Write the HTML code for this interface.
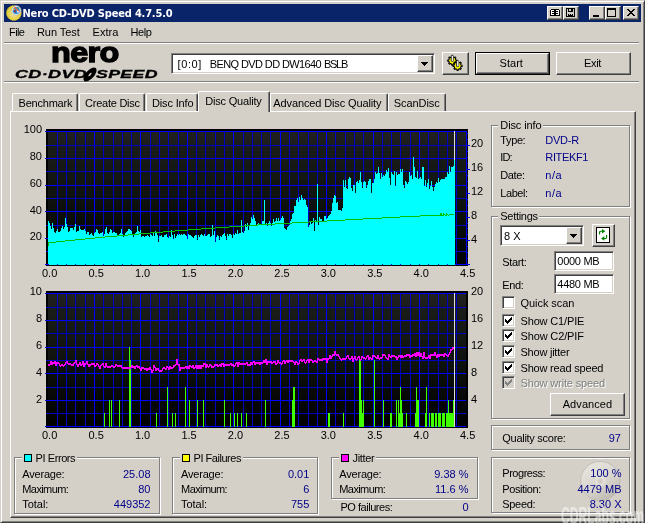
<!DOCTYPE html><html><head><meta charset="utf-8"><title>Nero CD-DVD Speed 4.7.5.0</title><style>
*{box-sizing:border-box}
html,body{margin:0;padding:0}
body{width:645px;height:523px;overflow:hidden;background:#d4d0c8;position:relative;font-family:"Liberation Sans",sans-serif;font-size:11px;color:#000;line-height:13px}
.a{position:absolute;white-space:nowrap}
.t{position:absolute;white-space:nowrap;height:13px;line-height:13px}
.v{color:#000088}
.r{text-align:right}
.btn{position:absolute;background:#d4d0c8;border:1px solid;border-color:#fff #404040 #404040 #fff;box-shadow:inset -1px -1px 0 #808080,inset 1px 1px 0 #d4d0c8;text-align:center}
.sunk{position:absolute;background:#fff;border:1px solid;border-color:#808080 #fff #fff #808080;box-shadow:inset 1px 1px 0 #404040,inset -1px -1px 0 #d4d0c8}
.grp{position:absolute;border:1px solid #808080;box-shadow:inset 1px 1px 0 #fff,1px 1px 0 #fff}
.grp2{position:absolute;border:1px solid #808080;box-shadow:inset 1px 1px 0 #fff,1px 1px 0 #fff}
.glab{position:absolute;background:#d4d0c8;height:13px;line-height:13px;padding:0 2px;white-space:nowrap}
.tab{position:absolute;background:#d4d0c8;border-top:1px solid #fff;border-left:1px solid #fff;border-right:1px solid #404040;border-radius:2px 2px 0 0;box-shadow:inset -1px 0 0 #808080}
.cb{position:absolute;width:13px;height:13px;background:#fff;border:1px solid;border-color:#808080 #fff #fff #808080;box-shadow:inset 1px 1px 0 #404040,inset -1px -1px 0 #d4d0c8}
.hl{position:absolute;height:2px;border-top:1px solid #808080;border-bottom:1px solid #fff}
</style></head><body><div id="w" style="position:absolute;left:0;top:0;width:645px;height:523px;will-change:transform">
<div class="a" style="left:0;top:0;width:645px;height:523px;border:1px solid;border-color:#d4d0c8 #404040 #404040 #d4d0c8;box-shadow:inset 1px 1px 0 #fff,inset -1px -1px 0 #808080"></div>
<div class="a" style="left:4px;top:4px;width:637px;height:18px;background:#0a246a"></div>
<div class="a" style="left:22.5px;top:7px;height:14px;line-height:14px;color:#fff;font-family:'DejaVu Sans Condensed','DejaVu Sans','Liberation Sans',sans-serif;font-weight:bold;font-size:11px;letter-spacing:-0.18px">Nero CD-DVD Speed 4.7.5.0</div>
<svg class="a" style="left:5px;top:4px" width="19" height="18" viewBox="0 0 19 18">
<defs><radialGradient id="gd" cx="0.5" cy="0.55" r="0.5"><stop offset="0" stop-color="#efe6b0"/><stop offset="0.55" stop-color="#e6d460"/><stop offset="1" stop-color="#e2cc18"/></radialGradient></defs>
<polygon points="16.90,9.00 16.03,10.02 16.58,11.25 15.45,11.99 15.63,13.33 14.34,13.71 14.14,15.05 12.79,15.06 12.22,16.28 10.93,15.91 10.04,16.92 8.90,16.20 7.76,16.92 6.87,15.91 5.58,16.28 5.01,15.06 3.66,15.05 3.46,13.71 2.17,13.33 2.35,11.99 1.22,11.25 1.77,10.02 0.90,9.00 1.77,7.98 1.22,6.75 2.35,6.01 2.17,4.67 3.46,4.29 3.66,2.95 5.01,2.94 5.58,1.72 6.87,2.09 7.76,1.08 8.90,1.80 10.04,1.08 10.93,2.09 12.22,1.72 12.79,2.94 14.14,2.95 14.34,4.29 15.63,4.67 15.45,6.01 16.58,6.75 16.03,7.98" fill="url(#gd)"/>
<circle cx="11.3" cy="6.4" r="4.7" fill="#e4e6ec" stroke="#a8acb8" stroke-width=".6"/>
<circle cx="11.3" cy="6.4" r="3.5" fill="#2a92e0"/>
<path d="M8.6 7.4 L10.4 5.6 L10.6 8.9Z" fill="#a01414"/>
<path d="M9.8 3.4 L13.6 7.6" stroke="#f0683a" stroke-width="1.5" stroke-linecap="round"/>
<path d="M12 3.2 L14.2 3.6 L13.6 5.2Z" fill="#2a8a34"/>
<circle cx="12.9" cy="7.7" r=".9" fill="#fff"/><circle cx="8.6" cy="5.4" r=".7" fill="#f8e020"/>
</svg>
<div class="btn" style="left:547px;top:6px;width:16px;height:14px"></div>
<svg class="a" style="left:547px;top:6px" width="16" height="14" viewBox="0 0 16 14" shape-rendering="crispEdges"><rect x="3" y="3" width="5" height="7" fill="#000"/><rect x="4" y="4" width="3" height="5" fill="#fff"/><rect x="8" y="3" width="5" height="7" fill="#000"/><rect x="9" y="4" width="3" height="5" fill="#fff"/><rect x="5" y="5" width="2" height="1" fill="#000"/><rect x="5" y="7" width="2" height="1" fill="#000"/><rect x="9" y="5" width="2" height="1" fill="#000"/><rect x="9" y="7" width="2" height="1" fill="#000"/><rect x="3" y="3" width="1" height="1" fill="#d4d0c8"/><rect x="12" y="3" width="1" height="1" fill="#d4d0c8"/></svg>
<div class="btn" style="left:563px;top:6px;width:16px;height:14px"></div>
<svg class="a" style="left:563px;top:6px" width="16" height="14" viewBox="0 0 16 14" shape-rendering="crispEdges"><rect x="3.5" y="2.5" width="8" height="8" fill="none" stroke="#000" stroke-width="1"/><rect x="5" y="3" width="5" height="3" fill="#000"/><rect x="6" y="3" width="2" height="2" fill="#d4d0c8"/><rect x="5" y="8" width="5" height="2" fill="#000"/><rect x="6" y="8" width="1" height="1" fill="#d4d0c8"/><rect x="8" y="8" width="1" height="1" fill="#d4d0c8"/></svg>
<div class="btn" style="left:589px;top:6px;width:16px;height:14px"></div>
<svg class="a" style="left:589px;top:6px" width="16" height="14" viewBox="0 0 16 14" shape-rendering="crispEdges"><rect x="4" y="9" width="6" height="2" fill="#000"/></svg>
<div class="btn" style="left:605px;top:6px;width:16px;height:14px"></div>
<svg class="a" style="left:605px;top:6px" width="16" height="14" viewBox="0 0 16 14" shape-rendering="crispEdges"><rect x="2" y="2" width="9" height="9" fill="#000"/><rect x="3" y="4" width="7" height="6" fill="#d4d0c8"/></svg>
<div class="btn" style="left:623px;top:6px;width:16px;height:14px"></div>
<svg class="a" style="left:623px;top:6px" width="16" height="14" viewBox="0 0 16 14" shape-rendering="crispEdges"><path d="M4 3h2v1h1v1h2v-1h1v-1h2v1h-1v1h-1v1h-1v1h1v1h1v1h1v1h-2v-1h-1v-1h-2v1h-1v1h-2v-1h1v-1h1v-1h1v-1h-1v-1h-1v-1h-1z" fill="#000"/></svg>
<div class="t " style="left:9px;top:26px;letter-spacing:-0.58px;">File</div>
<div class="t " style="left:37px;top:26px;letter-spacing:-0.07px;">Run Test</div>
<div class="t " style="left:92.5px;top:26px;letter-spacing:0.06px;">Extra</div>
<div class="t " style="left:130.5px;top:26px;letter-spacing:-0.41px;">Help</div>
<div class="hl" style="left:4px;top:42px;width:635px"></div>
<div class="hl" style="left:4px;top:81px;width:635px"></div>
<div class="a" style="left:51px;top:35.5px;font-weight:bold;font-size:27px;line-height:34px;letter-spacing:-0.5px;-webkit-text-stroke:1.3px #000;transform-origin:0 0;transform:scaleX(1.2)">nero</div>
<div class="a" style="left:14.5px;top:68px;font-weight:bold;font-style:italic;font-size:10px;line-height:13px;transform-origin:0 0;transform:scaleX(1.8);letter-spacing:0.2px;-webkit-text-stroke:0.3px #000">CD·DVD</div>
<div class="a" style="left:96px;top:68px;font-weight:bold;font-style:italic;font-size:10px;line-height:13px;transform-origin:0 0;transform:scaleX(1.77);letter-spacing:0.2px;-webkit-text-stroke:0.3px #000">SPEED</div>
<svg class="a" style="left:80.5px;top:65.5px" width="18" height="17" viewBox="0 0 18 17"><ellipse cx="9" cy="8.5" rx="8.6" ry="4.2" transform="rotate(-48 9 8.5)" fill="#000"/><ellipse cx="9" cy="8.5" rx="2.2" ry="0.9" transform="rotate(-48 9 8.5)" fill="#d4d0c8"/></svg>
<div class="sunk" style="left:171px;top:53px;width:264px;height:21px"></div>
<div class="t " style="left:177.5px;top:58px;letter-spacing:0.61px;">[0:0]</div>
<div class="t " style="left:209.7px;top:58px;letter-spacing:-0.60px;">BENQ DVD DD DW1640</div>
<div class="t " style="left:324px;top:58px;letter-spacing:-1.29px;">BSLB</div>
<div class="btn" style="left:417px;top:55px;width:16px;height:17px"></div>
<svg class="a" style="left:417px;top:55px" width="16" height="17" shape-rendering="crispEdges"><path d="M4 7h7l-3.5 4z" fill="#000"/></svg>
<div class="btn" style="left:442px;top:52px;width:27px;height:23px"></div>
<svg class="a" style="left:442px;top:52px" width="27" height="23" viewBox="442 52 27 23"><path d="M455.72 59.84L456.86 60.02L456.86 61.18L455.72 61.36L455.26 62.48L455.93 63.42L455.12 64.23L454.18 63.56L453.06 64.02L452.88 65.16L451.72 65.16L451.54 64.02L450.42 63.56L449.48 64.23L448.67 63.42L449.34 62.48L448.88 61.36L447.74 61.18L447.74 60.02L448.88 59.84L449.34 58.72L448.67 57.78L449.48 56.97L450.42 57.64L451.54 57.18L451.72 56.04L452.88 56.04L453.06 57.18L454.18 57.64L455.12 56.97L455.93 57.78L455.26 58.72Z" fill="#f8f400" stroke="#000" stroke-width="1.1" stroke-linejoin="round"/><path d="M461.02 65.04L462.16 65.22L462.16 66.38L461.02 66.56L460.56 67.68L461.23 68.62L460.42 69.43L459.48 68.76L458.36 69.22L458.18 70.36L457.02 70.36L456.84 69.22L455.72 68.76L454.78 69.43L453.97 68.62L454.64 67.68L454.18 66.56L453.04 66.38L453.04 65.22L454.18 65.04L454.64 63.92L453.97 62.98L454.78 62.17L455.72 62.84L456.84 62.38L457.02 61.24L458.18 61.24L458.36 62.38L459.48 62.84L460.42 62.17L461.23 62.98L460.56 63.92Z" fill="#f8f400" stroke="#000" stroke-width="1.1" stroke-linejoin="round"/><path d="M451.2 56.2l1.1-1.4 1.1 1.4v5h-2.2z" fill="#c8c8d8" stroke="#000" stroke-width=".7"/><rect x="452.2" y="56" width="0.9" height="5" fill="#fff"/><path d="M456.5 61.4l1.1-1.4 1.1 1.4v5h-2.2z" fill="#c8c8d8" stroke="#000" stroke-width=".7"/><rect x="457.5" y="61.2" width="0.9" height="5" fill="#fff"/></svg>
<div class="a" style="left:475px;top:52px;width:75px;height:23px;background:#000"></div>
<div class="btn" style="left:476px;top:53px;width:73px;height:21px"></div>
<div class="t " style="left:499.5px;top:57px;letter-spacing:0.05px;">Start</div>
<div class="btn" style="left:556px;top:52px;width:75px;height:23px"></div>
<div class="t " style="left:584px;top:57px;letter-spacing:-0.34px;">Exit</div>
<div class="a" style="left:10px;top:111px;width:626px;height:407px;border:1px solid;border-color:#fff #404040 #404040 #fff;box-shadow:inset -1px -1px 0 #808080"></div>
<div class="tab" style="left:12px;top:93px;width:66px;height:18px"></div>
<div class="t " style="left:18.5px;top:97px;letter-spacing:-0.21px;">Benchmark</div>
<div class="tab" style="left:79px;top:93px;width:66px;height:18px"></div>
<div class="t " style="left:85px;top:97px;letter-spacing:-0.24px;">Create Disc</div>
<div class="tab" style="left:146px;top:93px;width:52px;height:18px"></div>
<div class="t " style="left:152px;top:97px;letter-spacing:-0.15px;">Disc Info</div>
<div class="tab" style="left:270px;top:93px;width:118px;height:18px"></div>
<div class="t " style="left:273.3px;top:97px;letter-spacing:-0.12px;">Advanced Disc Quality</div>
<div class="tab" style="left:388px;top:93px;width:58px;height:18px"></div>
<div class="t " style="left:393.7px;top:97px;letter-spacing:-0.06px;">ScanDisc</div>
<div class="tab" style="left:198px;top:91px;width:72px;height:21px"></div>
<div class="t " style="left:205.3px;top:95px;letter-spacing:-0.20px;">Disc Quality</div>
<svg class="a" style="left:0;top:0" width="645" height="523" viewBox="0 0 645 523" shape-rendering="crispEdges">
<defs><linearGradient id="bg129" x1="0" y1="0" x2="0" y2="1"><stop offset="0" stop-color="#202020"/><stop offset="0.12" stop-color="#1a1c1a"/><stop offset="0.5" stop-color="#0f120f"/><stop offset="1" stop-color="#000"/></linearGradient><linearGradient id="bg291" x1="0" y1="0" x2="0" y2="1"><stop offset="0" stop-color="#202020"/><stop offset="0.12" stop-color="#1a1c1a"/><stop offset="0.5" stop-color="#0f120f"/><stop offset="1" stop-color="#000"/></linearGradient></defs>
<rect x="46" y="129" width="422" height="137" fill="#000"/>
<rect x="48" y="131" width="418" height="133" fill="url(#bg129)"/>
<rect x="57" y="131" width="1" height="134" fill="#0000c4"/>
<rect x="66" y="131" width="1" height="134" fill="#0000c4"/>
<rect x="75" y="131" width="1" height="134" fill="#0000c4"/>
<rect x="85" y="131" width="1" height="134" fill="#0000c4"/>
<rect x="94" y="131" width="1" height="134" fill="#0000ff"/>
<rect x="103" y="131" width="1" height="134" fill="#0000c4"/>
<rect x="113" y="131" width="1" height="134" fill="#0000c4"/>
<rect x="122" y="131" width="1" height="134" fill="#0000c4"/>
<rect x="131" y="131" width="1" height="134" fill="#0000c4"/>
<rect x="140" y="131" width="1" height="134" fill="#0000ff"/>
<rect x="150" y="131" width="1" height="134" fill="#0000c4"/>
<rect x="159" y="131" width="1" height="134" fill="#0000c4"/>
<rect x="168" y="131" width="1" height="134" fill="#0000c4"/>
<rect x="178" y="131" width="1" height="134" fill="#0000c4"/>
<rect x="187" y="131" width="1" height="134" fill="#0000ff"/>
<rect x="196" y="131" width="1" height="134" fill="#0000c4"/>
<rect x="205" y="131" width="1" height="134" fill="#0000c4"/>
<rect x="215" y="131" width="1" height="134" fill="#0000c4"/>
<rect x="224" y="131" width="1" height="134" fill="#0000c4"/>
<rect x="233" y="131" width="1" height="134" fill="#0000ff"/>
<rect x="243" y="131" width="1" height="134" fill="#0000c4"/>
<rect x="252" y="131" width="1" height="134" fill="#0000c4"/>
<rect x="261" y="131" width="1" height="134" fill="#0000c4"/>
<rect x="270" y="131" width="1" height="134" fill="#0000c4"/>
<rect x="280" y="131" width="1" height="134" fill="#0000ff"/>
<rect x="289" y="131" width="1" height="134" fill="#0000c4"/>
<rect x="298" y="131" width="1" height="134" fill="#0000c4"/>
<rect x="308" y="131" width="1" height="134" fill="#0000c4"/>
<rect x="317" y="131" width="1" height="134" fill="#0000c4"/>
<rect x="326" y="131" width="1" height="134" fill="#0000ff"/>
<rect x="335" y="131" width="1" height="134" fill="#0000c4"/>
<rect x="345" y="131" width="1" height="134" fill="#0000c4"/>
<rect x="354" y="131" width="1" height="134" fill="#0000c4"/>
<rect x="363" y="131" width="1" height="134" fill="#0000c4"/>
<rect x="373" y="131" width="1" height="134" fill="#0000ff"/>
<rect x="382" y="131" width="1" height="134" fill="#0000c4"/>
<rect x="391" y="131" width="1" height="134" fill="#0000c4"/>
<rect x="400" y="131" width="1" height="134" fill="#0000c4"/>
<rect x="410" y="131" width="1" height="134" fill="#0000c4"/>
<rect x="419" y="131" width="1" height="134" fill="#0000ff"/>
<rect x="428" y="131" width="1" height="134" fill="#0000c4"/>
<rect x="438" y="131" width="1" height="134" fill="#0000c4"/>
<rect x="447" y="131" width="1" height="134" fill="#0000c4"/>
<rect x="456" y="131" width="1" height="134" fill="#0000c4"/>
<rect x="466" y="131" width="1" height="134" fill="#0000ff"/>
<rect x="45" y="131" width="421" height="1" fill="#0000ff"/>
<rect x="46" y="145" width="420" height="1" fill="#0000c4"/>
<rect x="45" y="158" width="421" height="1" fill="#0000ff"/>
<rect x="46" y="171" width="420" height="1" fill="#0000c4"/>
<rect x="45" y="185" width="421" height="1" fill="#0000ff"/>
<rect x="46" y="198" width="420" height="1" fill="#0000c4"/>
<rect x="45" y="211" width="421" height="1" fill="#0000ff"/>
<rect x="46" y="225" width="420" height="1" fill="#0000c4"/>
<rect x="45" y="238" width="421" height="1" fill="#0000ff"/>
<rect x="46" y="251" width="420" height="1" fill="#0000c4"/>
<rect x="45" y="264" width="421" height="1" fill="#0000ff"/>
<rect x="466" y="264" width="4" height="1" fill="#0000ff"/>
<rect x="466" y="258" width="2" height="1" fill="#0000ff"/>
<rect x="466" y="252" width="2" height="1" fill="#0000ff"/>
<rect x="466" y="246" width="2" height="1" fill="#0000ff"/>
<rect x="466" y="240" width="4" height="1" fill="#0000ff"/>
<rect x="466" y="234" width="2" height="1" fill="#0000ff"/>
<rect x="466" y="228" width="2" height="1" fill="#0000ff"/>
<rect x="466" y="223" width="2" height="1" fill="#0000ff"/>
<rect x="466" y="217" width="4" height="1" fill="#0000ff"/>
<rect x="466" y="211" width="2" height="1" fill="#0000ff"/>
<rect x="466" y="205" width="2" height="1" fill="#0000ff"/>
<rect x="466" y="199" width="2" height="1" fill="#0000ff"/>
<rect x="466" y="193" width="4" height="1" fill="#0000ff"/>
<rect x="466" y="187" width="2" height="1" fill="#0000ff"/>
<rect x="466" y="181" width="2" height="1" fill="#0000ff"/>
<rect x="466" y="175" width="2" height="1" fill="#0000ff"/>
<rect x="466" y="169" width="4" height="1" fill="#0000ff"/>
<rect x="466" y="163" width="2" height="1" fill="#0000ff"/>
<rect x="466" y="157" width="2" height="1" fill="#0000ff"/>
<rect x="466" y="151" width="2" height="1" fill="#0000ff"/>
<rect x="466" y="145" width="4" height="1" fill="#0000ff"/>
<rect x="466" y="139" width="2" height="1" fill="#0000ff"/>
<rect x="466" y="133" width="2" height="1" fill="#0000ff"/>
<rect x="454" y="131" width="1" height="134" fill="#dcdcdc"/>
<path d="M48 265V221H49V223H50V226H51V229H52V223H53V228H54V232H55V233H56V231H57V229H58V232H59V232H60V231H61V228H62V226H63V229H64V227H65V218H66V224H67V227H68V232H69V231H70V228H71V228H72V228H73V230H74V227H75V224H76V232H77V231H78V231H79V226H80V229H81V230H82V230H83V230H84V229H85V231H86V234H87V232H88V232H89V235H90V234H91V233H92V235H93V236H94V233H95V232H96V229H97V230H98V233H99V234H100V233H101V233H102V232H103V236H104V234H105V229H106V227H107V233H108V234H109V232H110V229H111V230H112V233H113V232H114V232H115V233H116V233H117V236H118V235H119V234H120V233H121V229H122V234H123V237H124V236H125V233H126V232H127V231H128V229H129V229H130V230H131V231H132V235H133V237H134V235H135V233H136V232H137V226H138V231H139V232H140V230H141V237H142V236H143V236H144V237H145V236H146V236H147V235H148V236H149V237H150V234H151V235H152V236H153V233H154V236H155V231H156V233H157V235H158V242H159V236H160V236H161V235H162V237H163V237H164V235H165V235H166V234H167V237H168V238H169V236H170V237H171V230H172V235H173V239H174V234H175V238H176V236H177V234H178V235H179V234H180V235H181V234H182V235H183V234H184V234H185V235H186V236H187V239H188V234H189V235H190V235H191V236H192V237H193V238H194V236H195V235H196V235H197V240H198V235H199V237H200V235H201V234H202V235H203V236H204V234H205V236H206V236H207V235H208V234H209V234H210V237H211V236H212V225H213V235H214V231H215V242H216V237H217V235H218V236H219V240H220V236H221V237H222V235H223V234H224V233H225V236H226V240H227V234H228V236H229V234H230V234H231V235H232V238H233V234H234V235H235V233H236V234H237V230H238V234H239V233H240V233H241V220H242V232H243V233H244V231H245V224H246V227H247V223H248V230H249V225H250V223H251V217H252V219H253V215H254V218H255V221H256V225H257V224H258V223H259V224H260V224H261V225H262V221H263V221H264V200H265V225H266V223H267V226H268V223H269V221H270V223H271V226H272V223H273V219H274V222H275V221H276V218H277V221H278V218H279V221H280V220H281V218H282V216H283V218H284V228H285V229H286V230H287V227H288V226H289V225H290V221H291V219H292V214H293V213H294V206H295V206H296V200H297V198H298V202H299V197H300V200H301V195H302V198H303V200H304V199H305V200H306V205H307V207H308V227H309V225H310V221H311V224H312V223H313V218H314V231H315V220H316V221H317V184H318V225H319V217H320V219H321V219H322V221H323V222H324V216H325V216H326V219H327V218H328V216H329V215H330V214H331V211H332V203H333V198H334V195H335V196H336V203H337V202H338V210H339V210H340V210H341V211H342V208H343V180H344V187H345V180H346V188H347V189H348V179H349V177H350V178H351V188H352V191H353V185H354V185H355V193H356V182H357V181H358V183H359V180H360V172H361V182H362V188H363V182H364V181H365V182H366V188H367V185H368V181H369V179H370V179H371V193H372V183H373V183H374V179H375V172H376V174H377V173H378V167H379V173H380V179H381V173H382V177H383V175H384V176H385V174H386V170H387V172H388V168H389V178H390V185H391V172H392V174H393V175H394V171H395V186H396V172H397V175H398V174H399V174H400V169H401V172H402V169H403V185H404V188H405V181H406V182H407V184H408V182H409V172H410V176H411V175H412V179H413V157H414V167H415V177H416V178H417V171H418V179H419V178H420V177H421V179H422V167H423V167H424V186H425V180H426V187H427V183H428V179H429V189H430V186H431V181H432V187H433V191H434V187H435V184H436V182H437V183H438V178H439V182H440V180H441V179H442V179H443V179H444V179H445V177H446V177H447V172H448V174H449V166H450V172H451V167H452V167H453V166H454V160H455V265Z" fill="#00ffff"/>
<rect x="48" y="264" width="1" height="1" fill="#0000ff"/>
<rect x="57" y="264" width="1" height="1" fill="#0000ff"/>
<rect x="66" y="264" width="1" height="1" fill="#0000ff"/>
<rect x="75" y="264" width="1" height="1" fill="#0000ff"/>
<rect x="85" y="264" width="1" height="1" fill="#0000ff"/>
<rect x="94" y="264" width="1" height="1" fill="#0000ff"/>
<rect x="103" y="264" width="1" height="1" fill="#0000ff"/>
<rect x="113" y="264" width="1" height="1" fill="#0000ff"/>
<rect x="122" y="264" width="1" height="1" fill="#0000ff"/>
<rect x="131" y="264" width="1" height="1" fill="#0000ff"/>
<rect x="140" y="264" width="1" height="1" fill="#0000ff"/>
<rect x="150" y="264" width="1" height="1" fill="#0000ff"/>
<rect x="159" y="264" width="1" height="1" fill="#0000ff"/>
<rect x="168" y="264" width="1" height="1" fill="#0000ff"/>
<rect x="178" y="264" width="1" height="1" fill="#0000ff"/>
<rect x="187" y="264" width="1" height="1" fill="#0000ff"/>
<rect x="196" y="264" width="1" height="1" fill="#0000ff"/>
<rect x="205" y="264" width="1" height="1" fill="#0000ff"/>
<rect x="215" y="264" width="1" height="1" fill="#0000ff"/>
<rect x="224" y="264" width="1" height="1" fill="#0000ff"/>
<rect x="233" y="264" width="1" height="1" fill="#0000ff"/>
<rect x="243" y="264" width="1" height="1" fill="#0000ff"/>
<rect x="252" y="264" width="1" height="1" fill="#0000ff"/>
<rect x="261" y="264" width="1" height="1" fill="#0000ff"/>
<rect x="270" y="264" width="1" height="1" fill="#0000ff"/>
<rect x="280" y="264" width="1" height="1" fill="#0000ff"/>
<rect x="289" y="264" width="1" height="1" fill="#0000ff"/>
<rect x="298" y="264" width="1" height="1" fill="#0000ff"/>
<rect x="308" y="264" width="1" height="1" fill="#0000ff"/>
<rect x="317" y="264" width="1" height="1" fill="#0000ff"/>
<rect x="326" y="264" width="1" height="1" fill="#0000ff"/>
<rect x="335" y="264" width="1" height="1" fill="#0000ff"/>
<rect x="345" y="264" width="1" height="1" fill="#0000ff"/>
<rect x="354" y="264" width="1" height="1" fill="#0000ff"/>
<rect x="363" y="264" width="1" height="1" fill="#0000ff"/>
<rect x="373" y="264" width="1" height="1" fill="#0000ff"/>
<rect x="382" y="264" width="1" height="1" fill="#0000ff"/>
<rect x="391" y="264" width="1" height="1" fill="#0000ff"/>
<rect x="400" y="264" width="1" height="1" fill="#0000ff"/>
<rect x="410" y="264" width="1" height="1" fill="#0000ff"/>
<rect x="419" y="264" width="1" height="1" fill="#0000ff"/>
<rect x="428" y="264" width="1" height="1" fill="#0000ff"/>
<rect x="438" y="264" width="1" height="1" fill="#0000ff"/>
<rect x="447" y="264" width="1" height="1" fill="#0000ff"/>
<rect x="45" y="264" width="4" height="1" fill="#0000ff"/><rect x="455" y="264" width="15" height="1" fill="#0000ff"/>
<rect x="48" y="242" width="1" height="4" fill="#00c000"/>
<rect x="48" y="242" width="1" height="1" fill="#00c000"/>
<rect x="49" y="242" width="1" height="1" fill="#00c000"/>
<rect x="50" y="242" width="1" height="1" fill="#00c000"/>
<rect x="51" y="242" width="1" height="1" fill="#00c000"/>
<rect x="52" y="242" width="1" height="1" fill="#00c000"/>
<rect x="53" y="242" width="1" height="1" fill="#00c000"/>
<rect x="54" y="242" width="1" height="1" fill="#00c000"/>
<rect x="55" y="242" width="1" height="1" fill="#00c000"/>
<rect x="56" y="241" width="1" height="1" fill="#00c000"/>
<rect x="57" y="241" width="1" height="1" fill="#00c000"/>
<rect x="58" y="241" width="1" height="1" fill="#00c000"/>
<rect x="59" y="241" width="1" height="1" fill="#00c000"/>
<rect x="60" y="241" width="1" height="1" fill="#00c000"/>
<rect x="61" y="241" width="1" height="1" fill="#00c000"/>
<rect x="62" y="241" width="1" height="1" fill="#00c000"/>
<rect x="63" y="241" width="1" height="1" fill="#00c000"/>
<rect x="64" y="241" width="1" height="1" fill="#00c000"/>
<rect x="65" y="240" width="1" height="1" fill="#00c000"/>
<rect x="66" y="240" width="1" height="1" fill="#00c000"/>
<rect x="67" y="240" width="1" height="1" fill="#00c000"/>
<rect x="68" y="240" width="1" height="1" fill="#00c000"/>
<rect x="69" y="240" width="1" height="1" fill="#00c000"/>
<rect x="70" y="240" width="1" height="1" fill="#00c000"/>
<rect x="71" y="240" width="1" height="1" fill="#00c000"/>
<rect x="72" y="240" width="1" height="1" fill="#00c000"/>
<rect x="73" y="240" width="1" height="1" fill="#00c000"/>
<rect x="74" y="240" width="1" height="1" fill="#00c000"/>
<rect x="75" y="239" width="1" height="1" fill="#00c000"/>
<rect x="76" y="239" width="1" height="1" fill="#00c000"/>
<rect x="77" y="239" width="1" height="1" fill="#00c000"/>
<rect x="78" y="239" width="1" height="1" fill="#00c000"/>
<rect x="79" y="239" width="1" height="1" fill="#00c000"/>
<rect x="80" y="239" width="1" height="1" fill="#00c000"/>
<rect x="81" y="239" width="1" height="1" fill="#00c000"/>
<rect x="82" y="239" width="1" height="1" fill="#00c000"/>
<rect x="83" y="239" width="1" height="1" fill="#00c000"/>
<rect x="84" y="239" width="1" height="1" fill="#00c000"/>
<rect x="85" y="238" width="1" height="1" fill="#00c000"/>
<rect x="86" y="238" width="1" height="1" fill="#00c000"/>
<rect x="87" y="238" width="1" height="1" fill="#00c000"/>
<rect x="88" y="238" width="1" height="1" fill="#00c000"/>
<rect x="89" y="238" width="1" height="1" fill="#00c000"/>
<rect x="90" y="238" width="1" height="1" fill="#00c000"/>
<rect x="91" y="238" width="1" height="1" fill="#00c000"/>
<rect x="92" y="238" width="1" height="1" fill="#00c000"/>
<rect x="93" y="238" width="1" height="1" fill="#00c000"/>
<rect x="94" y="238" width="1" height="1" fill="#00c000"/>
<rect x="95" y="237" width="1" height="1" fill="#00c000"/>
<rect x="96" y="237" width="1" height="1" fill="#00c000"/>
<rect x="97" y="237" width="1" height="1" fill="#00c000"/>
<rect x="98" y="237" width="1" height="1" fill="#00c000"/>
<rect x="99" y="237" width="1" height="1" fill="#00c000"/>
<rect x="100" y="237" width="1" height="1" fill="#00c000"/>
<rect x="101" y="237" width="1" height="1" fill="#00c000"/>
<rect x="102" y="237" width="1" height="1" fill="#00c000"/>
<rect x="103" y="237" width="1" height="1" fill="#00c000"/>
<rect x="104" y="237" width="1" height="1" fill="#00c000"/>
<rect x="105" y="236" width="1" height="1" fill="#00c000"/>
<rect x="106" y="236" width="1" height="1" fill="#00c000"/>
<rect x="107" y="236" width="1" height="1" fill="#00c000"/>
<rect x="108" y="236" width="1" height="1" fill="#00c000"/>
<rect x="109" y="236" width="1" height="1" fill="#00c000"/>
<rect x="110" y="236" width="1" height="1" fill="#00c000"/>
<rect x="111" y="236" width="1" height="1" fill="#00c000"/>
<rect x="112" y="236" width="1" height="1" fill="#00c000"/>
<rect x="113" y="236" width="1" height="1" fill="#00c000"/>
<rect x="114" y="236" width="1" height="1" fill="#00c000"/>
<rect x="115" y="236" width="1" height="1" fill="#00c000"/>
<rect x="116" y="236" width="1" height="1" fill="#00c000"/>
<rect x="117" y="235" width="1" height="1" fill="#00c000"/>
<rect x="118" y="235" width="1" height="1" fill="#00c000"/>
<rect x="119" y="235" width="1" height="1" fill="#00c000"/>
<rect x="120" y="235" width="1" height="1" fill="#00c000"/>
<rect x="121" y="235" width="1" height="1" fill="#00c000"/>
<rect x="122" y="235" width="1" height="1" fill="#00c000"/>
<rect x="123" y="235" width="1" height="1" fill="#00c000"/>
<rect x="124" y="235" width="1" height="1" fill="#00c000"/>
<rect x="125" y="235" width="1" height="1" fill="#00c000"/>
<rect x="126" y="235" width="1" height="1" fill="#00c000"/>
<rect x="127" y="235" width="1" height="1" fill="#00c000"/>
<rect x="128" y="234" width="1" height="1" fill="#00c000"/>
<rect x="129" y="234" width="1" height="1" fill="#00c000"/>
<rect x="130" y="234" width="1" height="1" fill="#00c000"/>
<rect x="131" y="234" width="1" height="1" fill="#00c000"/>
<rect x="132" y="234" width="1" height="1" fill="#00c000"/>
<rect x="133" y="234" width="1" height="1" fill="#00c000"/>
<rect x="134" y="234" width="1" height="1" fill="#00c000"/>
<rect x="135" y="234" width="1" height="1" fill="#00c000"/>
<rect x="136" y="234" width="1" height="1" fill="#00c000"/>
<rect x="137" y="234" width="1" height="1" fill="#00c000"/>
<rect x="138" y="234" width="1" height="1" fill="#00c000"/>
<rect x="139" y="233" width="1" height="1" fill="#00c000"/>
<rect x="140" y="233" width="1" height="1" fill="#00c000"/>
<rect x="141" y="233" width="1" height="1" fill="#00c000"/>
<rect x="142" y="233" width="1" height="1" fill="#00c000"/>
<rect x="143" y="233" width="1" height="1" fill="#00c000"/>
<rect x="144" y="233" width="1" height="1" fill="#00c000"/>
<rect x="145" y="233" width="1" height="1" fill="#00c000"/>
<rect x="146" y="233" width="1" height="1" fill="#00c000"/>
<rect x="147" y="233" width="1" height="1" fill="#00c000"/>
<rect x="148" y="233" width="1" height="1" fill="#00c000"/>
<rect x="149" y="233" width="1" height="1" fill="#00c000"/>
<rect x="150" y="232" width="1" height="1" fill="#00c000"/>
<rect x="151" y="232" width="1" height="1" fill="#00c000"/>
<rect x="152" y="232" width="1" height="1" fill="#00c000"/>
<rect x="153" y="232" width="1" height="1" fill="#00c000"/>
<rect x="154" y="232" width="1" height="1" fill="#00c000"/>
<rect x="155" y="232" width="1" height="1" fill="#00c000"/>
<rect x="156" y="232" width="1" height="1" fill="#00c000"/>
<rect x="157" y="232" width="1" height="1" fill="#00c000"/>
<rect x="158" y="232" width="1" height="1" fill="#00c000"/>
<rect x="159" y="232" width="1" height="1" fill="#00c000"/>
<rect x="160" y="232" width="1" height="1" fill="#00c000"/>
<rect x="161" y="232" width="1" height="1" fill="#00c000"/>
<rect x="162" y="232" width="1" height="1" fill="#00c000"/>
<rect x="163" y="231" width="1" height="1" fill="#00c000"/>
<rect x="164" y="231" width="1" height="1" fill="#00c000"/>
<rect x="165" y="231" width="1" height="1" fill="#00c000"/>
<rect x="166" y="231" width="1" height="1" fill="#00c000"/>
<rect x="167" y="231" width="1" height="1" fill="#00c000"/>
<rect x="168" y="231" width="1" height="1" fill="#00c000"/>
<rect x="169" y="231" width="1" height="1" fill="#00c000"/>
<rect x="170" y="231" width="1" height="1" fill="#00c000"/>
<rect x="171" y="231" width="1" height="1" fill="#00c000"/>
<rect x="172" y="231" width="1" height="1" fill="#00c000"/>
<rect x="173" y="231" width="1" height="1" fill="#00c000"/>
<rect x="174" y="231" width="1" height="1" fill="#00c000"/>
<rect x="175" y="230" width="1" height="1" fill="#00c000"/>
<rect x="176" y="230" width="1" height="1" fill="#00c000"/>
<rect x="177" y="230" width="1" height="1" fill="#00c000"/>
<rect x="178" y="230" width="1" height="1" fill="#00c000"/>
<rect x="179" y="230" width="1" height="1" fill="#00c000"/>
<rect x="180" y="230" width="1" height="1" fill="#00c000"/>
<rect x="181" y="230" width="1" height="1" fill="#00c000"/>
<rect x="182" y="230" width="1" height="1" fill="#00c000"/>
<rect x="183" y="230" width="1" height="1" fill="#00c000"/>
<rect x="184" y="230" width="1" height="1" fill="#00c000"/>
<rect x="185" y="230" width="1" height="1" fill="#00c000"/>
<rect x="186" y="230" width="1" height="1" fill="#00c000"/>
<rect x="187" y="230" width="1" height="1" fill="#00c000"/>
<rect x="188" y="229" width="1" height="1" fill="#00c000"/>
<rect x="189" y="229" width="1" height="1" fill="#00c000"/>
<rect x="190" y="229" width="1" height="1" fill="#00c000"/>
<rect x="191" y="229" width="1" height="1" fill="#00c000"/>
<rect x="192" y="229" width="1" height="1" fill="#00c000"/>
<rect x="193" y="229" width="1" height="1" fill="#00c000"/>
<rect x="194" y="229" width="1" height="1" fill="#00c000"/>
<rect x="195" y="229" width="1" height="1" fill="#00c000"/>
<rect x="196" y="229" width="1" height="1" fill="#00c000"/>
<rect x="197" y="229" width="1" height="1" fill="#00c000"/>
<rect x="198" y="229" width="1" height="1" fill="#00c000"/>
<rect x="199" y="229" width="1" height="1" fill="#00c000"/>
<rect x="200" y="229" width="1" height="1" fill="#00c000"/>
<rect x="201" y="228" width="1" height="1" fill="#00c000"/>
<rect x="202" y="228" width="1" height="1" fill="#00c000"/>
<rect x="203" y="228" width="1" height="1" fill="#00c000"/>
<rect x="204" y="228" width="1" height="1" fill="#00c000"/>
<rect x="205" y="228" width="1" height="1" fill="#00c000"/>
<rect x="206" y="228" width="1" height="1" fill="#00c000"/>
<rect x="207" y="228" width="1" height="1" fill="#00c000"/>
<rect x="208" y="228" width="1" height="1" fill="#00c000"/>
<rect x="209" y="228" width="1" height="1" fill="#00c000"/>
<rect x="210" y="228" width="1" height="1" fill="#00c000"/>
<rect x="211" y="228" width="1" height="1" fill="#00c000"/>
<rect x="212" y="228" width="1" height="1" fill="#00c000"/>
<rect x="213" y="228" width="1" height="1" fill="#00c000"/>
<rect x="214" y="228" width="1" height="1" fill="#00c000"/>
<rect x="215" y="227" width="1" height="1" fill="#00c000"/>
<rect x="216" y="227" width="1" height="1" fill="#00c000"/>
<rect x="217" y="227" width="1" height="1" fill="#00c000"/>
<rect x="218" y="227" width="1" height="1" fill="#00c000"/>
<rect x="219" y="227" width="1" height="1" fill="#00c000"/>
<rect x="220" y="227" width="1" height="1" fill="#00c000"/>
<rect x="221" y="227" width="1" height="1" fill="#00c000"/>
<rect x="222" y="227" width="1" height="1" fill="#00c000"/>
<rect x="223" y="227" width="1" height="1" fill="#00c000"/>
<rect x="224" y="227" width="1" height="1" fill="#00c000"/>
<rect x="225" y="227" width="1" height="1" fill="#00c000"/>
<rect x="226" y="227" width="1" height="1" fill="#00c000"/>
<rect x="227" y="227" width="1" height="1" fill="#00c000"/>
<rect x="228" y="227" width="1" height="1" fill="#00c000"/>
<rect x="229" y="226" width="1" height="1" fill="#00c000"/>
<rect x="230" y="226" width="1" height="1" fill="#00c000"/>
<rect x="231" y="226" width="1" height="1" fill="#00c000"/>
<rect x="232" y="226" width="1" height="1" fill="#00c000"/>
<rect x="233" y="226" width="1" height="1" fill="#00c000"/>
<rect x="234" y="226" width="1" height="1" fill="#00c000"/>
<rect x="235" y="226" width="1" height="1" fill="#00c000"/>
<rect x="236" y="226" width="1" height="1" fill="#00c000"/>
<rect x="237" y="226" width="1" height="1" fill="#00c000"/>
<rect x="238" y="226" width="1" height="1" fill="#00c000"/>
<rect x="239" y="226" width="1" height="1" fill="#00c000"/>
<rect x="240" y="226" width="1" height="1" fill="#00c000"/>
<rect x="241" y="226" width="1" height="1" fill="#00c000"/>
<rect x="242" y="226" width="1" height="1" fill="#00c000"/>
<rect x="243" y="226" width="1" height="1" fill="#00c000"/>
<rect x="244" y="225" width="1" height="1" fill="#00c000"/>
<rect x="245" y="225" width="1" height="1" fill="#00c000"/>
<rect x="246" y="225" width="1" height="1" fill="#00c000"/>
<rect x="247" y="225" width="1" height="1" fill="#00c000"/>
<rect x="248" y="225" width="1" height="1" fill="#00c000"/>
<rect x="249" y="225" width="1" height="1" fill="#00c000"/>
<rect x="250" y="225" width="1" height="1" fill="#00c000"/>
<rect x="251" y="225" width="1" height="1" fill="#00c000"/>
<rect x="252" y="225" width="1" height="1" fill="#00c000"/>
<rect x="253" y="225" width="1" height="1" fill="#00c000"/>
<rect x="254" y="225" width="1" height="1" fill="#00c000"/>
<rect x="255" y="225" width="1" height="1" fill="#00c000"/>
<rect x="256" y="225" width="1" height="1" fill="#00c000"/>
<rect x="257" y="225" width="1" height="1" fill="#00c000"/>
<rect x="258" y="224" width="1" height="1" fill="#00c000"/>
<rect x="259" y="224" width="1" height="1" fill="#00c000"/>
<rect x="260" y="224" width="1" height="1" fill="#00c000"/>
<rect x="261" y="224" width="1" height="1" fill="#00c000"/>
<rect x="262" y="224" width="1" height="1" fill="#00c000"/>
<rect x="263" y="224" width="1" height="1" fill="#00c000"/>
<rect x="264" y="224" width="1" height="1" fill="#00c000"/>
<rect x="265" y="224" width="1" height="1" fill="#00c000"/>
<rect x="266" y="224" width="1" height="1" fill="#00c000"/>
<rect x="267" y="224" width="1" height="1" fill="#00c000"/>
<rect x="268" y="224" width="1" height="1" fill="#00c000"/>
<rect x="269" y="224" width="1" height="1" fill="#00c000"/>
<rect x="270" y="224" width="1" height="1" fill="#00c000"/>
<rect x="271" y="224" width="1" height="1" fill="#00c000"/>
<rect x="272" y="224" width="1" height="1" fill="#00c000"/>
<rect x="273" y="224" width="1" height="1" fill="#00c000"/>
<rect x="274" y="224" width="1" height="1" fill="#00c000"/>
<rect x="275" y="223" width="1" height="1" fill="#00c000"/>
<rect x="276" y="223" width="1" height="1" fill="#00c000"/>
<rect x="277" y="223" width="1" height="1" fill="#00c000"/>
<rect x="278" y="223" width="1" height="1" fill="#00c000"/>
<rect x="279" y="223" width="1" height="1" fill="#00c000"/>
<rect x="280" y="223" width="1" height="1" fill="#00c000"/>
<rect x="281" y="223" width="1" height="1" fill="#00c000"/>
<rect x="282" y="223" width="1" height="1" fill="#00c000"/>
<rect x="283" y="223" width="1" height="1" fill="#00c000"/>
<rect x="284" y="223" width="1" height="1" fill="#00c000"/>
<rect x="285" y="223" width="1" height="1" fill="#00c000"/>
<rect x="286" y="223" width="1" height="1" fill="#00c000"/>
<rect x="287" y="223" width="1" height="1" fill="#00c000"/>
<rect x="288" y="223" width="1" height="1" fill="#00c000"/>
<rect x="289" y="223" width="1" height="1" fill="#00c000"/>
<rect x="290" y="223" width="1" height="1" fill="#00c000"/>
<rect x="291" y="223" width="1" height="1" fill="#00c000"/>
<rect x="292" y="222" width="1" height="1" fill="#00c000"/>
<rect x="293" y="222" width="1" height="1" fill="#00c000"/>
<rect x="294" y="222" width="1" height="1" fill="#00c000"/>
<rect x="295" y="222" width="1" height="1" fill="#00c000"/>
<rect x="296" y="222" width="1" height="1" fill="#00c000"/>
<rect x="297" y="222" width="1" height="1" fill="#00c000"/>
<rect x="298" y="222" width="1" height="1" fill="#00c000"/>
<rect x="299" y="222" width="1" height="1" fill="#00c000"/>
<rect x="300" y="222" width="1" height="1" fill="#00c000"/>
<rect x="301" y="222" width="1" height="1" fill="#00c000"/>
<rect x="302" y="222" width="1" height="1" fill="#00c000"/>
<rect x="303" y="222" width="1" height="1" fill="#00c000"/>
<rect x="304" y="222" width="1" height="1" fill="#00c000"/>
<rect x="305" y="222" width="1" height="1" fill="#00c000"/>
<rect x="306" y="222" width="1" height="1" fill="#00c000"/>
<rect x="307" y="222" width="1" height="1" fill="#00c000"/>
<rect x="308" y="222" width="1" height="1" fill="#00c000"/>
<rect x="309" y="221" width="1" height="1" fill="#00c000"/>
<rect x="310" y="221" width="1" height="1" fill="#00c000"/>
<rect x="311" y="221" width="1" height="1" fill="#00c000"/>
<rect x="312" y="221" width="1" height="1" fill="#00c000"/>
<rect x="313" y="221" width="1" height="1" fill="#00c000"/>
<rect x="314" y="221" width="1" height="1" fill="#00c000"/>
<rect x="315" y="221" width="1" height="1" fill="#00c000"/>
<rect x="316" y="221" width="1" height="1" fill="#00c000"/>
<rect x="317" y="221" width="1" height="1" fill="#00c000"/>
<rect x="318" y="221" width="1" height="1" fill="#00c000"/>
<rect x="319" y="221" width="1" height="1" fill="#00c000"/>
<rect x="320" y="221" width="1" height="1" fill="#00c000"/>
<rect x="321" y="221" width="1" height="1" fill="#00c000"/>
<rect x="322" y="221" width="1" height="1" fill="#00c000"/>
<rect x="323" y="221" width="1" height="1" fill="#00c000"/>
<rect x="324" y="221" width="1" height="1" fill="#00c000"/>
<rect x="325" y="221" width="1" height="1" fill="#00c000"/>
<rect x="326" y="221" width="1" height="1" fill="#00c000"/>
<rect x="327" y="220" width="1" height="1" fill="#00c000"/>
<rect x="328" y="220" width="1" height="1" fill="#00c000"/>
<rect x="329" y="220" width="1" height="1" fill="#00c000"/>
<rect x="330" y="220" width="1" height="1" fill="#00c000"/>
<rect x="331" y="220" width="1" height="1" fill="#00c000"/>
<rect x="332" y="220" width="1" height="1" fill="#00c000"/>
<rect x="333" y="220" width="1" height="1" fill="#00c000"/>
<rect x="334" y="220" width="1" height="1" fill="#00c000"/>
<rect x="335" y="220" width="1" height="1" fill="#00c000"/>
<rect x="336" y="220" width="1" height="1" fill="#00c000"/>
<rect x="337" y="220" width="1" height="1" fill="#00c000"/>
<rect x="338" y="220" width="1" height="1" fill="#00c000"/>
<rect x="339" y="220" width="1" height="1" fill="#00c000"/>
<rect x="340" y="220" width="1" height="1" fill="#00c000"/>
<rect x="341" y="220" width="1" height="1" fill="#00c000"/>
<rect x="342" y="220" width="1" height="1" fill="#00c000"/>
<rect x="343" y="220" width="1" height="1" fill="#00c000"/>
<rect x="344" y="220" width="1" height="1" fill="#00c000"/>
<rect x="345" y="219" width="1" height="1" fill="#00c000"/>
<rect x="346" y="219" width="1" height="1" fill="#00c000"/>
<rect x="347" y="219" width="1" height="1" fill="#00c000"/>
<rect x="348" y="219" width="1" height="1" fill="#00c000"/>
<rect x="349" y="219" width="1" height="1" fill="#00c000"/>
<rect x="350" y="219" width="1" height="1" fill="#00c000"/>
<rect x="351" y="219" width="1" height="1" fill="#00c000"/>
<rect x="352" y="219" width="1" height="1" fill="#00c000"/>
<rect x="353" y="219" width="1" height="1" fill="#00c000"/>
<rect x="354" y="219" width="1" height="1" fill="#00c000"/>
<rect x="355" y="219" width="1" height="1" fill="#00c000"/>
<rect x="356" y="219" width="1" height="1" fill="#00c000"/>
<rect x="357" y="219" width="1" height="1" fill="#00c000"/>
<rect x="358" y="219" width="1" height="1" fill="#00c000"/>
<rect x="359" y="219" width="1" height="1" fill="#00c000"/>
<rect x="360" y="219" width="1" height="1" fill="#00c000"/>
<rect x="361" y="219" width="1" height="1" fill="#00c000"/>
<rect x="362" y="219" width="1" height="1" fill="#00c000"/>
<rect x="363" y="218" width="1" height="1" fill="#00c000"/>
<rect x="364" y="218" width="1" height="1" fill="#00c000"/>
<rect x="365" y="218" width="1" height="1" fill="#00c000"/>
<rect x="366" y="218" width="1" height="1" fill="#00c000"/>
<rect x="367" y="218" width="1" height="1" fill="#00c000"/>
<rect x="368" y="218" width="1" height="1" fill="#00c000"/>
<rect x="369" y="218" width="1" height="1" fill="#00c000"/>
<rect x="370" y="218" width="1" height="1" fill="#00c000"/>
<rect x="371" y="218" width="1" height="1" fill="#00c000"/>
<rect x="372" y="218" width="1" height="1" fill="#00c000"/>
<rect x="373" y="218" width="1" height="1" fill="#00c000"/>
<rect x="374" y="218" width="1" height="1" fill="#00c000"/>
<rect x="375" y="218" width="1" height="1" fill="#00c000"/>
<rect x="376" y="218" width="1" height="1" fill="#00c000"/>
<rect x="377" y="218" width="1" height="1" fill="#00c000"/>
<rect x="378" y="218" width="1" height="1" fill="#00c000"/>
<rect x="379" y="218" width="1" height="1" fill="#00c000"/>
<rect x="380" y="218" width="1" height="1" fill="#00c000"/>
<rect x="381" y="218" width="1" height="1" fill="#00c000"/>
<rect x="382" y="217" width="1" height="1" fill="#00c000"/>
<rect x="383" y="217" width="1" height="1" fill="#00c000"/>
<rect x="384" y="217" width="1" height="1" fill="#00c000"/>
<rect x="385" y="217" width="1" height="1" fill="#00c000"/>
<rect x="386" y="217" width="1" height="1" fill="#00c000"/>
<rect x="387" y="217" width="1" height="1" fill="#00c000"/>
<rect x="388" y="217" width="1" height="1" fill="#00c000"/>
<rect x="389" y="217" width="1" height="1" fill="#00c000"/>
<rect x="390" y="217" width="1" height="1" fill="#00c000"/>
<rect x="391" y="217" width="1" height="1" fill="#00c000"/>
<rect x="392" y="217" width="1" height="1" fill="#00c000"/>
<rect x="393" y="217" width="1" height="1" fill="#00c000"/>
<rect x="394" y="217" width="1" height="1" fill="#00c000"/>
<rect x="395" y="217" width="1" height="1" fill="#00c000"/>
<rect x="396" y="217" width="1" height="1" fill="#00c000"/>
<rect x="397" y="217" width="1" height="1" fill="#00c000"/>
<rect x="398" y="217" width="1" height="1" fill="#00c000"/>
<rect x="399" y="217" width="1" height="1" fill="#00c000"/>
<rect x="400" y="216" width="1" height="1" fill="#00c000"/>
<rect x="401" y="216" width="1" height="1" fill="#00c000"/>
<rect x="402" y="216" width="1" height="1" fill="#00c000"/>
<rect x="403" y="216" width="1" height="1" fill="#00c000"/>
<rect x="404" y="216" width="1" height="1" fill="#00c000"/>
<rect x="405" y="216" width="1" height="1" fill="#00c000"/>
<rect x="406" y="216" width="1" height="1" fill="#00c000"/>
<rect x="407" y="216" width="1" height="1" fill="#00c000"/>
<rect x="408" y="216" width="1" height="1" fill="#00c000"/>
<rect x="409" y="216" width="1" height="1" fill="#00c000"/>
<rect x="410" y="216" width="1" height="1" fill="#00c000"/>
<rect x="411" y="216" width="1" height="1" fill="#00c000"/>
<rect x="412" y="216" width="1" height="1" fill="#00c000"/>
<rect x="413" y="216" width="1" height="1" fill="#00c000"/>
<rect x="414" y="216" width="1" height="1" fill="#00c000"/>
<rect x="415" y="216" width="1" height="1" fill="#00c000"/>
<rect x="416" y="216" width="1" height="1" fill="#00c000"/>
<rect x="417" y="216" width="1" height="1" fill="#00c000"/>
<rect x="418" y="216" width="1" height="1" fill="#00c000"/>
<rect x="419" y="216" width="1" height="1" fill="#00c000"/>
<rect x="420" y="215" width="1" height="1" fill="#00c000"/>
<rect x="421" y="215" width="1" height="1" fill="#00c000"/>
<rect x="422" y="215" width="1" height="1" fill="#00c000"/>
<rect x="423" y="215" width="1" height="1" fill="#00c000"/>
<rect x="424" y="215" width="1" height="1" fill="#00c000"/>
<rect x="425" y="215" width="1" height="1" fill="#00c000"/>
<rect x="426" y="215" width="1" height="1" fill="#00c000"/>
<rect x="427" y="215" width="1" height="1" fill="#00c000"/>
<rect x="428" y="215" width="1" height="1" fill="#00c000"/>
<rect x="429" y="215" width="1" height="1" fill="#00c000"/>
<rect x="430" y="215" width="1" height="1" fill="#00c000"/>
<rect x="431" y="215" width="1" height="1" fill="#00c000"/>
<rect x="432" y="215" width="1" height="1" fill="#00c000"/>
<rect x="433" y="215" width="1" height="1" fill="#00c000"/>
<rect x="434" y="215" width="1" height="1" fill="#00c000"/>
<rect x="435" y="215" width="1" height="1" fill="#00c000"/>
<rect x="436" y="215" width="1" height="1" fill="#00c000"/>
<rect x="437" y="215" width="1" height="1" fill="#00c000"/>
<rect x="438" y="215" width="1" height="1" fill="#00c000"/>
<rect x="439" y="215" width="1" height="1" fill="#00c000"/>
<rect x="440" y="213" width="1" height="3" fill="#00c000"/>
<rect x="441" y="213" width="1" height="3" fill="#00c000"/>
<rect x="442" y="215" width="1" height="1" fill="#00c000"/>
<rect x="443" y="213" width="1" height="3" fill="#00c000"/>
<rect x="444" y="214" width="1" height="1" fill="#00c000"/>
<rect x="445" y="215" width="1" height="1" fill="#00c000"/>
<rect x="446" y="213" width="1" height="3" fill="#00c000"/>
<rect x="447" y="214" width="1" height="1" fill="#00c000"/>
<rect x="448" y="215" width="1" height="1" fill="#00c000"/>
<rect x="449" y="214" width="1" height="1" fill="#00c000"/>
<rect x="450" y="214" width="1" height="1" fill="#00c000"/>
<rect x="451" y="214" width="1" height="1" fill="#00c000"/>
<rect x="452" y="214" width="1" height="1" fill="#00c000"/>
<rect x="453" y="214" width="1" height="1" fill="#00c000"/>
<rect x="46" y="291" width="422" height="137" fill="#000"/>
<rect x="48" y="293" width="418" height="133" fill="url(#bg291)"/>
<rect x="57" y="293" width="1" height="134" fill="#0000c4"/>
<rect x="66" y="293" width="1" height="134" fill="#0000c4"/>
<rect x="75" y="293" width="1" height="134" fill="#0000c4"/>
<rect x="85" y="293" width="1" height="134" fill="#0000c4"/>
<rect x="94" y="293" width="1" height="134" fill="#0000ff"/>
<rect x="103" y="293" width="1" height="134" fill="#0000c4"/>
<rect x="113" y="293" width="1" height="134" fill="#0000c4"/>
<rect x="122" y="293" width="1" height="134" fill="#0000c4"/>
<rect x="131" y="293" width="1" height="134" fill="#0000c4"/>
<rect x="140" y="293" width="1" height="134" fill="#0000ff"/>
<rect x="150" y="293" width="1" height="134" fill="#0000c4"/>
<rect x="159" y="293" width="1" height="134" fill="#0000c4"/>
<rect x="168" y="293" width="1" height="134" fill="#0000c4"/>
<rect x="178" y="293" width="1" height="134" fill="#0000c4"/>
<rect x="187" y="293" width="1" height="134" fill="#0000ff"/>
<rect x="196" y="293" width="1" height="134" fill="#0000c4"/>
<rect x="205" y="293" width="1" height="134" fill="#0000c4"/>
<rect x="215" y="293" width="1" height="134" fill="#0000c4"/>
<rect x="224" y="293" width="1" height="134" fill="#0000c4"/>
<rect x="233" y="293" width="1" height="134" fill="#0000ff"/>
<rect x="243" y="293" width="1" height="134" fill="#0000c4"/>
<rect x="252" y="293" width="1" height="134" fill="#0000c4"/>
<rect x="261" y="293" width="1" height="134" fill="#0000c4"/>
<rect x="270" y="293" width="1" height="134" fill="#0000c4"/>
<rect x="280" y="293" width="1" height="134" fill="#0000ff"/>
<rect x="289" y="293" width="1" height="134" fill="#0000c4"/>
<rect x="298" y="293" width="1" height="134" fill="#0000c4"/>
<rect x="308" y="293" width="1" height="134" fill="#0000c4"/>
<rect x="317" y="293" width="1" height="134" fill="#0000c4"/>
<rect x="326" y="293" width="1" height="134" fill="#0000ff"/>
<rect x="335" y="293" width="1" height="134" fill="#0000c4"/>
<rect x="345" y="293" width="1" height="134" fill="#0000c4"/>
<rect x="354" y="293" width="1" height="134" fill="#0000c4"/>
<rect x="363" y="293" width="1" height="134" fill="#0000c4"/>
<rect x="373" y="293" width="1" height="134" fill="#0000ff"/>
<rect x="382" y="293" width="1" height="134" fill="#0000c4"/>
<rect x="391" y="293" width="1" height="134" fill="#0000c4"/>
<rect x="400" y="293" width="1" height="134" fill="#0000c4"/>
<rect x="410" y="293" width="1" height="134" fill="#0000c4"/>
<rect x="419" y="293" width="1" height="134" fill="#0000ff"/>
<rect x="428" y="293" width="1" height="134" fill="#0000c4"/>
<rect x="438" y="293" width="1" height="134" fill="#0000c4"/>
<rect x="447" y="293" width="1" height="134" fill="#0000c4"/>
<rect x="456" y="293" width="1" height="134" fill="#0000c4"/>
<rect x="45" y="293" width="421" height="1" fill="#0000ff"/>
<rect x="46" y="307" width="420" height="1" fill="#0000c4"/>
<rect x="45" y="320" width="421" height="1" fill="#0000ff"/>
<rect x="46" y="333" width="420" height="1" fill="#0000c4"/>
<rect x="45" y="347" width="421" height="1" fill="#0000ff"/>
<rect x="46" y="360" width="420" height="1" fill="#0000c4"/>
<rect x="45" y="373" width="421" height="1" fill="#0000ff"/>
<rect x="46" y="387" width="420" height="1" fill="#0000c4"/>
<rect x="45" y="400" width="421" height="1" fill="#0000ff"/>
<rect x="46" y="413" width="420" height="1" fill="#0000c4"/>
<rect x="45" y="426" width="421" height="1" fill="#0000ff"/>
<rect x="104" y="413" width="1" height="14" fill="#40ff00"/>
<rect x="109" y="400" width="1" height="27" fill="#40ff00"/>
<rect x="111" y="400" width="1" height="27" fill="#40ff00"/>
<rect x="119" y="400" width="1" height="27" fill="#40ff00"/>
<rect x="129" y="347" width="1" height="80" fill="#40ff00"/>
<rect x="130" y="360" width="1" height="67" fill="#40ff00"/>
<rect x="156" y="413" width="1" height="14" fill="#40ff00"/>
<rect x="167" y="387" width="1" height="40" fill="#40ff00"/>
<rect x="172" y="413" width="1" height="14" fill="#40ff00"/>
<rect x="175" y="413" width="1" height="14" fill="#40ff00"/>
<rect x="185" y="387" width="1" height="40" fill="#40ff00"/>
<rect x="189" y="400" width="1" height="27" fill="#40ff00"/>
<rect x="197" y="400" width="1" height="27" fill="#40ff00"/>
<rect x="203" y="400" width="1" height="27" fill="#40ff00"/>
<rect x="224" y="400" width="1" height="27" fill="#40ff00"/>
<rect x="230" y="413" width="1" height="14" fill="#40ff00"/>
<rect x="234" y="413" width="1" height="14" fill="#40ff00"/>
<rect x="237" y="413" width="1" height="14" fill="#40ff00"/>
<rect x="241" y="413" width="1" height="14" fill="#40ff00"/>
<rect x="246" y="413" width="1" height="14" fill="#40ff00"/>
<rect x="265" y="400" width="1" height="27" fill="#40ff00"/>
<rect x="292" y="400" width="1" height="27" fill="#40ff00"/>
<rect x="293" y="387" width="2" height="40" fill="#40ff00"/>
<rect x="328" y="413" width="2" height="14" fill="#40ff00"/>
<rect x="343" y="413" width="1" height="14" fill="#40ff00"/>
<rect x="359" y="360" width="2" height="67" fill="#40ff00"/>
<rect x="361" y="400" width="1" height="27" fill="#40ff00"/>
<rect x="360" y="413" width="4" height="14" fill="#40ff00"/>
<rect x="363" y="400" width="1" height="27" fill="#40ff00"/>
<rect x="374" y="360" width="1" height="67" fill="#40ff00"/>
<rect x="383" y="400" width="1" height="27" fill="#40ff00"/>
<rect x="390" y="413" width="2" height="14" fill="#40ff00"/>
<rect x="396" y="400" width="1" height="27" fill="#40ff00"/>
<rect x="398" y="400" width="1" height="27" fill="#40ff00"/>
<rect x="400" y="387" width="1" height="40" fill="#40ff00"/>
<rect x="401" y="400" width="1" height="27" fill="#40ff00"/>
<rect x="398" y="413" width="5" height="14" fill="#40ff00"/>
<rect x="406" y="413" width="1" height="14" fill="#40ff00"/>
<rect x="416" y="387" width="1" height="40" fill="#40ff00"/>
<rect x="417" y="400" width="2" height="27" fill="#40ff00"/>
<rect x="415" y="413" width="4" height="14" fill="#40ff00"/>
<rect x="425" y="413" width="1" height="14" fill="#40ff00"/>
<rect x="426" y="387" width="1" height="40" fill="#40ff00"/>
<rect x="429" y="413" width="1" height="14" fill="#40ff00"/>
<rect x="431" y="413" width="3" height="14" fill="#40ff00"/>
<rect x="435" y="413" width="2" height="14" fill="#40ff00"/>
<rect x="438" y="413" width="3" height="14" fill="#40ff00"/>
<rect x="442" y="413" width="3" height="14" fill="#40ff00"/>
<rect x="446" y="413" width="8" height="14" fill="#40ff00"/>
<rect x="448" y="400" width="1" height="27" fill="#40ff00"/>
<rect x="453" y="400" width="1" height="27" fill="#40ff00"/>
<rect x="48" y="364" width="1" height="2" fill="#ff00ff"/>
<rect x="49" y="364" width="1" height="2" fill="#ff00ff"/>
<rect x="50" y="361" width="1" height="4" fill="#ff00ff"/>
<rect x="51" y="361" width="1" height="4" fill="#ff00ff"/>
<rect x="52" y="362" width="1" height="3" fill="#ff00ff"/>
<rect x="53" y="362" width="1" height="2" fill="#ff00ff"/>
<rect x="54" y="361" width="1" height="3" fill="#ff00ff"/>
<rect x="55" y="361" width="1" height="5" fill="#ff00ff"/>
<rect x="56" y="362" width="1" height="4" fill="#ff00ff"/>
<rect x="57" y="362" width="1" height="2" fill="#ff00ff"/>
<rect x="58" y="362" width="1" height="2" fill="#ff00ff"/>
<rect x="59" y="363" width="1" height="3" fill="#ff00ff"/>
<rect x="60" y="365" width="1" height="2" fill="#ff00ff"/>
<rect x="61" y="364" width="1" height="2" fill="#ff00ff"/>
<rect x="62" y="364" width="1" height="2" fill="#ff00ff"/>
<rect x="63" y="365" width="1" height="2" fill="#ff00ff"/>
<rect x="64" y="364" width="1" height="2" fill="#ff00ff"/>
<rect x="65" y="362" width="1" height="3" fill="#ff00ff"/>
<rect x="66" y="361" width="1" height="2" fill="#ff00ff"/>
<rect x="67" y="361" width="1" height="3" fill="#ff00ff"/>
<rect x="68" y="363" width="1" height="2" fill="#ff00ff"/>
<rect x="69" y="363" width="1" height="2" fill="#ff00ff"/>
<rect x="70" y="363" width="1" height="2" fill="#ff00ff"/>
<rect x="71" y="364" width="1" height="2" fill="#ff00ff"/>
<rect x="72" y="364" width="1" height="2" fill="#ff00ff"/>
<rect x="73" y="363" width="1" height="3" fill="#ff00ff"/>
<rect x="74" y="362" width="1" height="2" fill="#ff00ff"/>
<rect x="75" y="360" width="1" height="3" fill="#ff00ff"/>
<rect x="76" y="360" width="1" height="5" fill="#ff00ff"/>
<rect x="77" y="364" width="1" height="3" fill="#ff00ff"/>
<rect x="78" y="364" width="1" height="3" fill="#ff00ff"/>
<rect x="79" y="362" width="1" height="3" fill="#ff00ff"/>
<rect x="80" y="362" width="1" height="4" fill="#ff00ff"/>
<rect x="81" y="364" width="1" height="2" fill="#ff00ff"/>
<rect x="82" y="361" width="1" height="4" fill="#ff00ff"/>
<rect x="83" y="361" width="1" height="6" fill="#ff00ff"/>
<rect x="84" y="363" width="1" height="4" fill="#ff00ff"/>
<rect x="85" y="363" width="1" height="2" fill="#ff00ff"/>
<rect x="86" y="361" width="1" height="3" fill="#ff00ff"/>
<rect x="87" y="361" width="1" height="4" fill="#ff00ff"/>
<rect x="88" y="364" width="1" height="3" fill="#ff00ff"/>
<rect x="89" y="364" width="1" height="3" fill="#ff00ff"/>
<rect x="90" y="364" width="1" height="2" fill="#ff00ff"/>
<rect x="91" y="363" width="1" height="2" fill="#ff00ff"/>
<rect x="92" y="363" width="1" height="2" fill="#ff00ff"/>
<rect x="93" y="363" width="1" height="2" fill="#ff00ff"/>
<rect x="94" y="363" width="1" height="4" fill="#ff00ff"/>
<rect x="95" y="365" width="1" height="2" fill="#ff00ff"/>
<rect x="96" y="363" width="1" height="3" fill="#ff00ff"/>
<rect x="97" y="363" width="1" height="2" fill="#ff00ff"/>
<rect x="98" y="364" width="1" height="3" fill="#ff00ff"/>
<rect x="99" y="366" width="1" height="3" fill="#ff00ff"/>
<rect x="100" y="365" width="1" height="4" fill="#ff00ff"/>
<rect x="101" y="364" width="1" height="2" fill="#ff00ff"/>
<rect x="102" y="363" width="1" height="2" fill="#ff00ff"/>
<rect x="103" y="363" width="1" height="4" fill="#ff00ff"/>
<rect x="104" y="366" width="1" height="2" fill="#ff00ff"/>
<rect x="105" y="363" width="1" height="5" fill="#ff00ff"/>
<rect x="106" y="363" width="1" height="4" fill="#ff00ff"/>
<rect x="107" y="366" width="1" height="2" fill="#ff00ff"/>
<rect x="108" y="366" width="1" height="2" fill="#ff00ff"/>
<rect x="109" y="366" width="1" height="2" fill="#ff00ff"/>
<rect x="110" y="366" width="1" height="2" fill="#ff00ff"/>
<rect x="111" y="365" width="1" height="2" fill="#ff00ff"/>
<rect x="112" y="365" width="1" height="2" fill="#ff00ff"/>
<rect x="113" y="366" width="1" height="2" fill="#ff00ff"/>
<rect x="114" y="366" width="1" height="2" fill="#ff00ff"/>
<rect x="115" y="364" width="1" height="3" fill="#ff00ff"/>
<rect x="116" y="364" width="1" height="2" fill="#ff00ff"/>
<rect x="117" y="365" width="1" height="2" fill="#ff00ff"/>
<rect x="118" y="365" width="1" height="2" fill="#ff00ff"/>
<rect x="119" y="365" width="1" height="2" fill="#ff00ff"/>
<rect x="120" y="365" width="1" height="2" fill="#ff00ff"/>
<rect x="121" y="365" width="1" height="3" fill="#ff00ff"/>
<rect x="122" y="367" width="1" height="2" fill="#ff00ff"/>
<rect x="123" y="367" width="1" height="2" fill="#ff00ff"/>
<rect x="124" y="367" width="1" height="2" fill="#ff00ff"/>
<rect x="125" y="367" width="1" height="2" fill="#ff00ff"/>
<rect x="126" y="367" width="1" height="2" fill="#ff00ff"/>
<rect x="127" y="367" width="1" height="2" fill="#ff00ff"/>
<rect x="128" y="367" width="1" height="2" fill="#ff00ff"/>
<rect x="129" y="367" width="1" height="2" fill="#ff00ff"/>
<rect x="130" y="367" width="1" height="2" fill="#ff00ff"/>
<rect x="131" y="365" width="1" height="3" fill="#ff00ff"/>
<rect x="132" y="365" width="1" height="3" fill="#ff00ff"/>
<rect x="133" y="366" width="1" height="2" fill="#ff00ff"/>
<rect x="134" y="366" width="1" height="3" fill="#ff00ff"/>
<rect x="135" y="366" width="1" height="3" fill="#ff00ff"/>
<rect x="136" y="365" width="1" height="2" fill="#ff00ff"/>
<rect x="137" y="365" width="1" height="3" fill="#ff00ff"/>
<rect x="138" y="366" width="1" height="2" fill="#ff00ff"/>
<rect x="139" y="366" width="1" height="3" fill="#ff00ff"/>
<rect x="140" y="368" width="1" height="3" fill="#ff00ff"/>
<rect x="141" y="367" width="1" height="4" fill="#ff00ff"/>
<rect x="142" y="367" width="1" height="2" fill="#ff00ff"/>
<rect x="143" y="367" width="1" height="2" fill="#ff00ff"/>
<rect x="144" y="368" width="1" height="2" fill="#ff00ff"/>
<rect x="145" y="368" width="1" height="2" fill="#ff00ff"/>
<rect x="146" y="368" width="1" height="3" fill="#ff00ff"/>
<rect x="147" y="368" width="1" height="3" fill="#ff00ff"/>
<rect x="148" y="368" width="1" height="2" fill="#ff00ff"/>
<rect x="149" y="367" width="1" height="3" fill="#ff00ff"/>
<rect x="150" y="367" width="1" height="3" fill="#ff00ff"/>
<rect x="151" y="369" width="1" height="4" fill="#ff00ff"/>
<rect x="152" y="370" width="1" height="3" fill="#ff00ff"/>
<rect x="153" y="365" width="1" height="6" fill="#ff00ff"/>
<rect x="154" y="365" width="1" height="3" fill="#ff00ff"/>
<rect x="155" y="367" width="1" height="4" fill="#ff00ff"/>
<rect x="156" y="368" width="1" height="3" fill="#ff00ff"/>
<rect x="157" y="368" width="1" height="2" fill="#ff00ff"/>
<rect x="158" y="368" width="1" height="3" fill="#ff00ff"/>
<rect x="159" y="370" width="1" height="2" fill="#ff00ff"/>
<rect x="160" y="370" width="1" height="2" fill="#ff00ff"/>
<rect x="161" y="370" width="1" height="2" fill="#ff00ff"/>
<rect x="162" y="368" width="1" height="3" fill="#ff00ff"/>
<rect x="163" y="367" width="1" height="2" fill="#ff00ff"/>
<rect x="164" y="367" width="1" height="2" fill="#ff00ff"/>
<rect x="165" y="368" width="1" height="2" fill="#ff00ff"/>
<rect x="166" y="366" width="1" height="4" fill="#ff00ff"/>
<rect x="167" y="366" width="1" height="2" fill="#ff00ff"/>
<rect x="168" y="367" width="1" height="3" fill="#ff00ff"/>
<rect x="169" y="366" width="1" height="4" fill="#ff00ff"/>
<rect x="170" y="366" width="1" height="3" fill="#ff00ff"/>
<rect x="171" y="367" width="1" height="2" fill="#ff00ff"/>
<rect x="172" y="367" width="1" height="2" fill="#ff00ff"/>
<rect x="173" y="365" width="1" height="3" fill="#ff00ff"/>
<rect x="174" y="365" width="1" height="2" fill="#ff00ff"/>
<rect x="175" y="364" width="1" height="2" fill="#ff00ff"/>
<rect x="176" y="359" width="1" height="6" fill="#ff00ff"/>
<rect x="177" y="359" width="1" height="6" fill="#ff00ff"/>
<rect x="178" y="364" width="1" height="2" fill="#ff00ff"/>
<rect x="179" y="364" width="1" height="7" fill="#ff00ff"/>
<rect x="180" y="367" width="1" height="4" fill="#ff00ff"/>
<rect x="181" y="367" width="1" height="2" fill="#ff00ff"/>
<rect x="182" y="367" width="1" height="2" fill="#ff00ff"/>
<rect x="183" y="367" width="1" height="2" fill="#ff00ff"/>
<rect x="184" y="367" width="1" height="2" fill="#ff00ff"/>
<rect x="185" y="366" width="1" height="2" fill="#ff00ff"/>
<rect x="186" y="366" width="1" height="3" fill="#ff00ff"/>
<rect x="187" y="366" width="1" height="3" fill="#ff00ff"/>
<rect x="188" y="366" width="1" height="3" fill="#ff00ff"/>
<rect x="189" y="365" width="1" height="4" fill="#ff00ff"/>
<rect x="190" y="365" width="1" height="2" fill="#ff00ff"/>
<rect x="191" y="366" width="1" height="2" fill="#ff00ff"/>
<rect x="192" y="365" width="1" height="3" fill="#ff00ff"/>
<rect x="193" y="365" width="1" height="4" fill="#ff00ff"/>
<rect x="194" y="367" width="1" height="2" fill="#ff00ff"/>
<rect x="195" y="365" width="1" height="3" fill="#ff00ff"/>
<rect x="196" y="365" width="1" height="4" fill="#ff00ff"/>
<rect x="197" y="365" width="1" height="4" fill="#ff00ff"/>
<rect x="198" y="365" width="1" height="4" fill="#ff00ff"/>
<rect x="199" y="365" width="1" height="4" fill="#ff00ff"/>
<rect x="200" y="365" width="1" height="4" fill="#ff00ff"/>
<rect x="201" y="365" width="1" height="4" fill="#ff00ff"/>
<rect x="202" y="365" width="1" height="2" fill="#ff00ff"/>
<rect x="203" y="363" width="1" height="4" fill="#ff00ff"/>
<rect x="204" y="363" width="1" height="2" fill="#ff00ff"/>
<rect x="205" y="363" width="1" height="5" fill="#ff00ff"/>
<rect x="206" y="364" width="1" height="4" fill="#ff00ff"/>
<rect x="207" y="364" width="1" height="3" fill="#ff00ff"/>
<rect x="208" y="366" width="1" height="2" fill="#ff00ff"/>
<rect x="209" y="364" width="1" height="3" fill="#ff00ff"/>
<rect x="210" y="364" width="1" height="2" fill="#ff00ff"/>
<rect x="211" y="365" width="1" height="3" fill="#ff00ff"/>
<rect x="212" y="366" width="1" height="2" fill="#ff00ff"/>
<rect x="213" y="366" width="1" height="2" fill="#ff00ff"/>
<rect x="214" y="364" width="1" height="3" fill="#ff00ff"/>
<rect x="215" y="364" width="1" height="2" fill="#ff00ff"/>
<rect x="216" y="364" width="1" height="2" fill="#ff00ff"/>
<rect x="217" y="364" width="1" height="3" fill="#ff00ff"/>
<rect x="218" y="365" width="1" height="2" fill="#ff00ff"/>
<rect x="219" y="364" width="1" height="2" fill="#ff00ff"/>
<rect x="220" y="364" width="1" height="3" fill="#ff00ff"/>
<rect x="221" y="363" width="1" height="4" fill="#ff00ff"/>
<rect x="222" y="363" width="1" height="2" fill="#ff00ff"/>
<rect x="223" y="363" width="1" height="4" fill="#ff00ff"/>
<rect x="224" y="364" width="1" height="3" fill="#ff00ff"/>
<rect x="225" y="364" width="1" height="2" fill="#ff00ff"/>
<rect x="226" y="364" width="1" height="2" fill="#ff00ff"/>
<rect x="227" y="364" width="1" height="2" fill="#ff00ff"/>
<rect x="228" y="364" width="1" height="2" fill="#ff00ff"/>
<rect x="229" y="364" width="1" height="2" fill="#ff00ff"/>
<rect x="230" y="363" width="1" height="2" fill="#ff00ff"/>
<rect x="231" y="363" width="1" height="3" fill="#ff00ff"/>
<rect x="232" y="364" width="1" height="2" fill="#ff00ff"/>
<rect x="233" y="364" width="1" height="3" fill="#ff00ff"/>
<rect x="234" y="365" width="1" height="2" fill="#ff00ff"/>
<rect x="235" y="363" width="1" height="3" fill="#ff00ff"/>
<rect x="236" y="362" width="1" height="2" fill="#ff00ff"/>
<rect x="237" y="362" width="1" height="5" fill="#ff00ff"/>
<rect x="238" y="362" width="1" height="5" fill="#ff00ff"/>
<rect x="239" y="362" width="1" height="3" fill="#ff00ff"/>
<rect x="240" y="363" width="1" height="2" fill="#ff00ff"/>
<rect x="241" y="363" width="1" height="2" fill="#ff00ff"/>
<rect x="242" y="363" width="1" height="2" fill="#ff00ff"/>
<rect x="243" y="363" width="1" height="2" fill="#ff00ff"/>
<rect x="244" y="363" width="1" height="2" fill="#ff00ff"/>
<rect x="245" y="363" width="1" height="2" fill="#ff00ff"/>
<rect x="246" y="362" width="1" height="2" fill="#ff00ff"/>
<rect x="247" y="362" width="1" height="4" fill="#ff00ff"/>
<rect x="248" y="364" width="1" height="2" fill="#ff00ff"/>
<rect x="249" y="364" width="1" height="2" fill="#ff00ff"/>
<rect x="250" y="362" width="1" height="4" fill="#ff00ff"/>
<rect x="251" y="362" width="1" height="3" fill="#ff00ff"/>
<rect x="252" y="362" width="1" height="3" fill="#ff00ff"/>
<rect x="253" y="361" width="1" height="2" fill="#ff00ff"/>
<rect x="254" y="361" width="1" height="4" fill="#ff00ff"/>
<rect x="255" y="362" width="1" height="3" fill="#ff00ff"/>
<rect x="256" y="362" width="1" height="2" fill="#ff00ff"/>
<rect x="257" y="362" width="1" height="2" fill="#ff00ff"/>
<rect x="258" y="362" width="1" height="2" fill="#ff00ff"/>
<rect x="259" y="362" width="1" height="3" fill="#ff00ff"/>
<rect x="260" y="362" width="1" height="3" fill="#ff00ff"/>
<rect x="261" y="362" width="1" height="2" fill="#ff00ff"/>
<rect x="262" y="362" width="1" height="2" fill="#ff00ff"/>
<rect x="263" y="360" width="1" height="3" fill="#ff00ff"/>
<rect x="264" y="360" width="1" height="3" fill="#ff00ff"/>
<rect x="265" y="359" width="1" height="4" fill="#ff00ff"/>
<rect x="266" y="359" width="1" height="6" fill="#ff00ff"/>
<rect x="267" y="361" width="1" height="4" fill="#ff00ff"/>
<rect x="268" y="361" width="1" height="2" fill="#ff00ff"/>
<rect x="269" y="361" width="1" height="2" fill="#ff00ff"/>
<rect x="270" y="361" width="1" height="2" fill="#ff00ff"/>
<rect x="271" y="361" width="1" height="3" fill="#ff00ff"/>
<rect x="272" y="362" width="1" height="2" fill="#ff00ff"/>
<rect x="273" y="361" width="1" height="2" fill="#ff00ff"/>
<rect x="274" y="361" width="1" height="2" fill="#ff00ff"/>
<rect x="275" y="361" width="1" height="4" fill="#ff00ff"/>
<rect x="276" y="363" width="1" height="2" fill="#ff00ff"/>
<rect x="277" y="360" width="1" height="4" fill="#ff00ff"/>
<rect x="278" y="360" width="1" height="3" fill="#ff00ff"/>
<rect x="279" y="362" width="1" height="2" fill="#ff00ff"/>
<rect x="280" y="362" width="1" height="2" fill="#ff00ff"/>
<rect x="281" y="363" width="1" height="2" fill="#ff00ff"/>
<rect x="282" y="361" width="1" height="3" fill="#ff00ff"/>
<rect x="283" y="360" width="1" height="2" fill="#ff00ff"/>
<rect x="284" y="360" width="1" height="4" fill="#ff00ff"/>
<rect x="285" y="361" width="1" height="3" fill="#ff00ff"/>
<rect x="286" y="360" width="1" height="2" fill="#ff00ff"/>
<rect x="287" y="360" width="1" height="3" fill="#ff00ff"/>
<rect x="288" y="360" width="1" height="3" fill="#ff00ff"/>
<rect x="289" y="360" width="1" height="2" fill="#ff00ff"/>
<rect x="290" y="360" width="1" height="2" fill="#ff00ff"/>
<rect x="291" y="360" width="1" height="2" fill="#ff00ff"/>
<rect x="292" y="360" width="1" height="2" fill="#ff00ff"/>
<rect x="293" y="361" width="1" height="2" fill="#ff00ff"/>
<rect x="294" y="362" width="1" height="3" fill="#ff00ff"/>
<rect x="295" y="361" width="1" height="4" fill="#ff00ff"/>
<rect x="296" y="361" width="1" height="2" fill="#ff00ff"/>
<rect x="297" y="362" width="1" height="3" fill="#ff00ff"/>
<rect x="298" y="363" width="1" height="2" fill="#ff00ff"/>
<rect x="299" y="360" width="1" height="4" fill="#ff00ff"/>
<rect x="300" y="359" width="1" height="2" fill="#ff00ff"/>
<rect x="301" y="359" width="1" height="3" fill="#ff00ff"/>
<rect x="302" y="360" width="1" height="2" fill="#ff00ff"/>
<rect x="303" y="359" width="1" height="2" fill="#ff00ff"/>
<rect x="304" y="359" width="1" height="4" fill="#ff00ff"/>
<rect x="305" y="362" width="1" height="2" fill="#ff00ff"/>
<rect x="306" y="360" width="1" height="3" fill="#ff00ff"/>
<rect x="307" y="359" width="1" height="2" fill="#ff00ff"/>
<rect x="308" y="359" width="1" height="4" fill="#ff00ff"/>
<rect x="309" y="359" width="1" height="4" fill="#ff00ff"/>
<rect x="310" y="359" width="1" height="2" fill="#ff00ff"/>
<rect x="311" y="359" width="1" height="2" fill="#ff00ff"/>
<rect x="312" y="360" width="1" height="3" fill="#ff00ff"/>
<rect x="313" y="361" width="1" height="2" fill="#ff00ff"/>
<rect x="314" y="360" width="1" height="2" fill="#ff00ff"/>
<rect x="315" y="360" width="1" height="2" fill="#ff00ff"/>
<rect x="316" y="361" width="1" height="2" fill="#ff00ff"/>
<rect x="317" y="358" width="1" height="5" fill="#ff00ff"/>
<rect x="318" y="358" width="1" height="2" fill="#ff00ff"/>
<rect x="319" y="359" width="1" height="2" fill="#ff00ff"/>
<rect x="320" y="359" width="1" height="2" fill="#ff00ff"/>
<rect x="321" y="359" width="1" height="2" fill="#ff00ff"/>
<rect x="322" y="358" width="1" height="3" fill="#ff00ff"/>
<rect x="323" y="358" width="1" height="2" fill="#ff00ff"/>
<rect x="324" y="358" width="1" height="2" fill="#ff00ff"/>
<rect x="325" y="358" width="1" height="2" fill="#ff00ff"/>
<rect x="326" y="358" width="1" height="5" fill="#ff00ff"/>
<rect x="327" y="358" width="1" height="5" fill="#ff00ff"/>
<rect x="328" y="358" width="1" height="2" fill="#ff00ff"/>
<rect x="329" y="355" width="1" height="4" fill="#ff00ff"/>
<rect x="330" y="355" width="1" height="4" fill="#ff00ff"/>
<rect x="331" y="356" width="1" height="3" fill="#ff00ff"/>
<rect x="332" y="354" width="1" height="3" fill="#ff00ff"/>
<rect x="333" y="354" width="1" height="2" fill="#ff00ff"/>
<rect x="334" y="351" width="1" height="5" fill="#ff00ff"/>
<rect x="335" y="351" width="1" height="4" fill="#ff00ff"/>
<rect x="336" y="354" width="1" height="2" fill="#ff00ff"/>
<rect x="337" y="354" width="1" height="2" fill="#ff00ff"/>
<rect x="338" y="354" width="1" height="3" fill="#ff00ff"/>
<rect x="339" y="356" width="1" height="3" fill="#ff00ff"/>
<rect x="340" y="358" width="1" height="2" fill="#ff00ff"/>
<rect x="341" y="359" width="1" height="2" fill="#ff00ff"/>
<rect x="342" y="358" width="1" height="2" fill="#ff00ff"/>
<rect x="343" y="358" width="1" height="2" fill="#ff00ff"/>
<rect x="344" y="358" width="1" height="2" fill="#ff00ff"/>
<rect x="345" y="358" width="1" height="2" fill="#ff00ff"/>
<rect x="346" y="356" width="1" height="3" fill="#ff00ff"/>
<rect x="347" y="355" width="1" height="2" fill="#ff00ff"/>
<rect x="348" y="355" width="1" height="4" fill="#ff00ff"/>
<rect x="349" y="358" width="1" height="2" fill="#ff00ff"/>
<rect x="350" y="358" width="1" height="2" fill="#ff00ff"/>
<rect x="351" y="356" width="1" height="3" fill="#ff00ff"/>
<rect x="352" y="356" width="1" height="6" fill="#ff00ff"/>
<rect x="353" y="358" width="1" height="4" fill="#ff00ff"/>
<rect x="354" y="356" width="1" height="3" fill="#ff00ff"/>
<rect x="355" y="356" width="1" height="4" fill="#ff00ff"/>
<rect x="356" y="359" width="1" height="2" fill="#ff00ff"/>
<rect x="357" y="357" width="1" height="3" fill="#ff00ff"/>
<rect x="358" y="356" width="1" height="2" fill="#ff00ff"/>
<rect x="359" y="356" width="1" height="4" fill="#ff00ff"/>
<rect x="360" y="359" width="1" height="2" fill="#ff00ff"/>
<rect x="361" y="356" width="1" height="4" fill="#ff00ff"/>
<rect x="362" y="356" width="1" height="2" fill="#ff00ff"/>
<rect x="363" y="357" width="1" height="2" fill="#ff00ff"/>
<rect x="364" y="357" width="1" height="2" fill="#ff00ff"/>
<rect x="365" y="358" width="1" height="2" fill="#ff00ff"/>
<rect x="366" y="356" width="1" height="3" fill="#ff00ff"/>
<rect x="367" y="355" width="1" height="2" fill="#ff00ff"/>
<rect x="368" y="355" width="1" height="5" fill="#ff00ff"/>
<rect x="369" y="357" width="1" height="3" fill="#ff00ff"/>
<rect x="370" y="357" width="1" height="2" fill="#ff00ff"/>
<rect x="371" y="358" width="1" height="2" fill="#ff00ff"/>
<rect x="372" y="355" width="1" height="5" fill="#ff00ff"/>
<rect x="373" y="355" width="1" height="2" fill="#ff00ff"/>
<rect x="374" y="355" width="1" height="2" fill="#ff00ff"/>
<rect x="375" y="356" width="1" height="2" fill="#ff00ff"/>
<rect x="376" y="357" width="1" height="2" fill="#ff00ff"/>
<rect x="377" y="355" width="1" height="4" fill="#ff00ff"/>
<rect x="378" y="355" width="1" height="4" fill="#ff00ff"/>
<rect x="379" y="358" width="1" height="2" fill="#ff00ff"/>
<rect x="380" y="357" width="1" height="2" fill="#ff00ff"/>
<rect x="381" y="357" width="1" height="2" fill="#ff00ff"/>
<rect x="382" y="354" width="1" height="4" fill="#ff00ff"/>
<rect x="383" y="354" width="1" height="2" fill="#ff00ff"/>
<rect x="384" y="354" width="1" height="2" fill="#ff00ff"/>
<rect x="385" y="355" width="1" height="3" fill="#ff00ff"/>
<rect x="386" y="357" width="1" height="2" fill="#ff00ff"/>
<rect x="387" y="358" width="1" height="2" fill="#ff00ff"/>
<rect x="388" y="354" width="1" height="6" fill="#ff00ff"/>
<rect x="389" y="354" width="1" height="3" fill="#ff00ff"/>
<rect x="390" y="356" width="1" height="2" fill="#ff00ff"/>
<rect x="391" y="355" width="1" height="3" fill="#ff00ff"/>
<rect x="392" y="355" width="1" height="2" fill="#ff00ff"/>
<rect x="393" y="355" width="1" height="2" fill="#ff00ff"/>
<rect x="394" y="355" width="1" height="2" fill="#ff00ff"/>
<rect x="395" y="356" width="1" height="2" fill="#ff00ff"/>
<rect x="396" y="356" width="1" height="4" fill="#ff00ff"/>
<rect x="397" y="357" width="1" height="3" fill="#ff00ff"/>
<rect x="398" y="355" width="1" height="3" fill="#ff00ff"/>
<rect x="399" y="355" width="1" height="2" fill="#ff00ff"/>
<rect x="400" y="355" width="1" height="3" fill="#ff00ff"/>
<rect x="401" y="355" width="1" height="3" fill="#ff00ff"/>
<rect x="402" y="355" width="1" height="3" fill="#ff00ff"/>
<rect x="403" y="356" width="1" height="2" fill="#ff00ff"/>
<rect x="404" y="355" width="1" height="2" fill="#ff00ff"/>
<rect x="405" y="355" width="1" height="2" fill="#ff00ff"/>
<rect x="406" y="354" width="1" height="3" fill="#ff00ff"/>
<rect x="407" y="354" width="1" height="2" fill="#ff00ff"/>
<rect x="408" y="354" width="1" height="2" fill="#ff00ff"/>
<rect x="409" y="354" width="1" height="4" fill="#ff00ff"/>
<rect x="410" y="355" width="1" height="3" fill="#ff00ff"/>
<rect x="411" y="355" width="1" height="2" fill="#ff00ff"/>
<rect x="412" y="354" width="1" height="3" fill="#ff00ff"/>
<rect x="413" y="354" width="1" height="2" fill="#ff00ff"/>
<rect x="414" y="353" width="1" height="3" fill="#ff00ff"/>
<rect x="415" y="353" width="1" height="4" fill="#ff00ff"/>
<rect x="416" y="352" width="1" height="5" fill="#ff00ff"/>
<rect x="417" y="352" width="1" height="4" fill="#ff00ff"/>
<rect x="418" y="352" width="1" height="4" fill="#ff00ff"/>
<rect x="419" y="352" width="1" height="5" fill="#ff00ff"/>
<rect x="420" y="353" width="1" height="4" fill="#ff00ff"/>
<rect x="421" y="353" width="1" height="4" fill="#ff00ff"/>
<rect x="422" y="356" width="1" height="3" fill="#ff00ff"/>
<rect x="423" y="352" width="1" height="7" fill="#ff00ff"/>
<rect x="424" y="352" width="1" height="6" fill="#ff00ff"/>
<rect x="425" y="357" width="1" height="2" fill="#ff00ff"/>
<rect x="426" y="357" width="1" height="2" fill="#ff00ff"/>
<rect x="427" y="357" width="1" height="2" fill="#ff00ff"/>
<rect x="428" y="355" width="1" height="3" fill="#ff00ff"/>
<rect x="429" y="355" width="1" height="4" fill="#ff00ff"/>
<rect x="430" y="354" width="1" height="5" fill="#ff00ff"/>
<rect x="431" y="354" width="1" height="2" fill="#ff00ff"/>
<rect x="432" y="354" width="1" height="2" fill="#ff00ff"/>
<rect x="433" y="354" width="1" height="2" fill="#ff00ff"/>
<rect x="434" y="352" width="1" height="4" fill="#ff00ff"/>
<rect x="435" y="352" width="1" height="4" fill="#ff00ff"/>
<rect x="436" y="355" width="1" height="3" fill="#ff00ff"/>
<rect x="437" y="354" width="1" height="4" fill="#ff00ff"/>
<rect x="438" y="354" width="1" height="3" fill="#ff00ff"/>
<rect x="439" y="354" width="1" height="3" fill="#ff00ff"/>
<rect x="440" y="354" width="1" height="2" fill="#ff00ff"/>
<rect x="441" y="354" width="1" height="2" fill="#ff00ff"/>
<rect x="442" y="354" width="1" height="2" fill="#ff00ff"/>
<rect x="443" y="354" width="1" height="3" fill="#ff00ff"/>
<rect x="444" y="353" width="1" height="4" fill="#ff00ff"/>
<rect x="445" y="353" width="1" height="2" fill="#ff00ff"/>
<rect x="446" y="354" width="1" height="2" fill="#ff00ff"/>
<rect x="447" y="355" width="1" height="2" fill="#ff00ff"/>
<rect x="448" y="354" width="1" height="3" fill="#ff00ff"/>
<rect x="449" y="352" width="1" height="3" fill="#ff00ff"/>
<rect x="450" y="349" width="1" height="4" fill="#ff00ff"/>
<rect x="451" y="349" width="1" height="2" fill="#ff00ff"/>
<rect x="452" y="347" width="1" height="3" fill="#ff00ff"/>
<rect x="453" y="347" width="1" height="2" fill="#ff00ff"/>
<rect x="454" y="293" width="1" height="134" fill="#dcdcdc"/>
</svg>
<div class="t " style="left:42.0px;top:267px;">0.0</div>
<div class="t " style="left:42.0px;top:429px;">0.0</div>
<div class="t " style="left:88.5px;top:267px;">0.5</div>
<div class="t " style="left:88.5px;top:429px;">0.5</div>
<div class="t " style="left:134.9px;top:267px;">1.0</div>
<div class="t " style="left:134.9px;top:429px;">1.0</div>
<div class="t " style="left:181.4px;top:267px;">1.5</div>
<div class="t " style="left:181.4px;top:429px;">1.5</div>
<div class="t " style="left:227.8px;top:267px;">2.0</div>
<div class="t " style="left:227.8px;top:429px;">2.0</div>
<div class="t " style="left:274.3px;top:267px;">2.5</div>
<div class="t " style="left:274.3px;top:429px;">2.5</div>
<div class="t " style="left:320.7px;top:267px;">3.0</div>
<div class="t " style="left:320.7px;top:429px;">3.0</div>
<div class="t " style="left:367.2px;top:267px;">3.5</div>
<div class="t " style="left:367.2px;top:429px;">3.5</div>
<div class="t " style="left:413.6px;top:267px;">4.0</div>
<div class="t " style="left:413.6px;top:429px;">4.0</div>
<div class="t " style="left:460.0px;top:267px;">4.5</div>
<div class="t " style="left:460.0px;top:429px;">4.5</div>
<div class="t " style="right:603px;top:123px;">100</div>
<div class="t " style="right:603px;top:150px;">80</div>
<div class="t " style="right:603px;top:177px;">60</div>
<div class="t " style="right:603px;top:204px;">40</div>
<div class="t " style="right:603px;top:230px;">20</div>
<div class="t " style="right:603px;top:285px;">10</div>
<div class="t " style="right:603px;top:312px;">8</div>
<div class="t " style="right:603px;top:339px;">6</div>
<div class="t " style="right:603px;top:366px;">4</div>
<div class="t " style="right:603px;top:393px;">2</div>
<div class="t " style="left:471px;top:137px;">20</div>
<div class="t " style="left:471px;top:161px;">16</div>
<div class="t " style="left:471px;top:185px;">12</div>
<div class="t " style="left:471px;top:209px;">8</div>
<div class="t " style="left:471px;top:233px;">4</div>
<div class="t " style="left:471px;top:285px;">20</div>
<div class="t " style="left:471px;top:312px;">16</div>
<div class="t " style="left:471px;top:339px;">12</div>
<div class="t " style="left:471px;top:366px;">8</div>
<div class="t " style="left:471px;top:393px;">4</div>
<div class="grp" style="left:491px;top:125px;width:139px;height:82px"></div>
<div class="a" style="left:498px;top:119px;width:45px;height:13px;background:#d4d0c8"></div>
<div class="t " style="left:500.3px;top:119px;letter-spacing:-0.11px;">Disc info</div>
<div class="t " style="left:500.3px;top:134px;letter-spacing:-0.38px;">Type:</div>
<div class="t v" style="left:545.3px;top:134px;letter-spacing:-0.26px;">DVD-R</div>
<div class="t " style="left:500.3px;top:151px;letter-spacing:-0.85px;">ID:</div>
<div class="t v" style="left:545.3px;top:151px;letter-spacing:-0.36px;">RITEKF1</div>
<div class="t " style="left:500.3px;top:169px;letter-spacing:-0.40px;">Date:</div>
<div class="t v" style="left:545.3px;top:169px;letter-spacing:0.56px;">n/a</div>
<div class="t " style="left:500.3px;top:187px;letter-spacing:-0.45px;">Label:</div>
<div class="t v" style="left:545.3px;top:187px;letter-spacing:0.56px;">n/a</div>
<div class="grp" style="left:491px;top:216px;width:139px;height:203px"></div>
<div class="a" style="left:498px;top:210px;width:41px;height:13px;background:#d4d0c8"></div>
<div class="t " style="left:500.3px;top:210px;letter-spacing:-0.29px;">Settings</div>
<div class="sunk" style="left:500px;top:225px;width:84px;height:21px"></div>
<div class="t " style="left:504px;top:230px;letter-spacing:-0.01px;">8 X</div>
<div class="btn" style="left:566px;top:227px;width:16px;height:17px"></div>
<svg class="a" style="left:566px;top:227px" width="16" height="17" shape-rendering="crispEdges"><path d="M4 7h7l-3.5 4z" fill="#000"/></svg>
<div class="btn" style="left:592px;top:224px;width:23px;height:23px"></div>
<svg class="a" style="left:592px;top:224px" width="23" height="23" viewBox="592 224 23 23"><rect x="596.5" y="227.5" width="13" height="15" fill="#fff" stroke="#000" stroke-width="1" shape-rendering="crispEdges"/>
<path d="M599.6 234.6V232.2q0-.9 .9-.9H602.5" fill="none" stroke="#008000" stroke-width="1.1"/><path d="M602 229l3.4 2.3-3.4 2.3z" fill="#008000"/>
<path d="M606.6 235V237.6q0 .9-.9 .9H604" fill="none" stroke="#008000" stroke-width="1.1"/><path d="M604.4 236.2l-3.4 2.3 3.4 2.3z" fill="#008000"/></svg>
<div class="t " style="left:502.3px;top:256px;letter-spacing:-0.34px;">Start:</div>
<div class="t " style="left:502.3px;top:279px;letter-spacing:-0.41px;">End:</div>
<div class="sunk" style="left:554px;top:251px;width:60px;height:20px"></div>
<div class="sunk" style="left:554px;top:274px;width:60px;height:20px"></div>
<div class="t " style="left:557.3px;top:255px;letter-spacing:-0.27px;">0000 MB</div>
<div class="t " style="left:557.3px;top:278px;letter-spacing:-0.27px;">4480 MB</div>
<div class="cb" style="left:502px;top:296px"></div>
<div class="t " style="left:520.5px;top:297px;letter-spacing:-0.06px;">Quick scan</div>
<div class="cb" style="left:502px;top:314px"></div>
<svg class="a" style="left:502px;top:314px" width="13" height="13" shape-rendering="crispEdges"><path d="M3 5v3l2 2 5-5v-3l-5 5z" fill="#000"/></svg>
<div class="t " style="left:520.5px;top:315px;letter-spacing:-0.15px;">Show C1/PIE</div>
<div class="cb" style="left:502px;top:329px"></div>
<svg class="a" style="left:502px;top:329px" width="13" height="13" shape-rendering="crispEdges"><path d="M3 5v3l2 2 5-5v-3l-5 5z" fill="#000"/></svg>
<div class="t " style="left:520.5px;top:330px;letter-spacing:-0.14px;">Show C2/PIF</div>
<div class="cb" style="left:502px;top:345px"></div>
<svg class="a" style="left:502px;top:345px" width="13" height="13" shape-rendering="crispEdges"><path d="M3 5v3l2 2 5-5v-3l-5 5z" fill="#000"/></svg>
<div class="t " style="left:520.5px;top:346px;letter-spacing:-0.23px;">Show jitter</div>
<div class="cb" style="left:502px;top:361px"></div>
<svg class="a" style="left:502px;top:361px" width="13" height="13" shape-rendering="crispEdges"><path d="M3 5v3l2 2 5-5v-3l-5 5z" fill="#000"/></svg>
<div class="t " style="left:520.5px;top:362px;letter-spacing:-0.19px;">Show read speed</div>
<div class="cb" style="left:502px;top:376px;background:#d4d0c8"></div>
<svg class="a" style="left:502px;top:376px" width="13" height="13" shape-rendering="crispEdges"><path d="M3 5v3l2 2 5-5v-3l-5 5z" fill="#808080"/></svg>
<div class="t " style="left:520.5px;top:377px;letter-spacing:-0.15px;color:#808080;text-shadow:1px 1px 0 #fff;">Show write speed</div>
<div class="btn" style="left:550px;top:393px;width:75px;height:23px"></div>
<div class="t " style="left:562.7px;top:398px;letter-spacing:0.08px;">Advanced</div>
<div class="grp" style="left:491px;top:425px;width:139px;height:25px"></div>
<div class="t " style="left:502.3px;top:432px;letter-spacing:-0.28px;">Quality score:</div>
<div class="t v" style="right:24px;top:432px;">97</div>
<div class="grp" style="left:491px;top:457px;width:139px;height:56px"></div>
<svg class="a" style="left:578px;top:459px" width="44" height="44" viewBox="0 0 44 44"><defs><linearGradient id="wd" x1="0.2" y1="0" x2="0.8" y2="1"><stop offset="0" stop-color="#ecebe6"/><stop offset="0.55" stop-color="#d8d5ce"/><stop offset="1" stop-color="#b4b0a8"/></linearGradient></defs><circle cx="22.3" cy="22" r="19.6" fill="url(#wd)" opacity=".8"/><circle cx="22.3" cy="22" r="19.6" fill="none" stroke="#b0aca4" stroke-width="1" opacity=".55"/><circle cx="22.3" cy="22" r="5.5" fill="#e4e2dc" opacity=".7"/><circle cx="22.3" cy="22" r="2.6" fill="#cfcbc3" opacity=".9"/></svg>
<div class="a" style="left:561px;top:502.7px;font-size:24px;line-height:26px;font-weight:bold;color:rgba(255,255,255,.5);transform-origin:0 0;transform:scaleX(.506);z-index:5">CDRLabs.com</div>
<div class="t " style="left:502.3px;top:467px;letter-spacing:-0.47px;">Progress:</div>
<div class="t v" style="right:23.5px;top:467px;">100 %</div>
<div class="t " style="left:502.3px;top:483px;letter-spacing:-0.41px;">Position:</div>
<div class="t v" style="right:23.5px;top:483px;">4479 MB</div>
<div class="t " style="left:502.3px;top:498px;letter-spacing:-0.32px;">Speed:</div>
<div class="t v" style="right:23.5px;top:498px;">8.30 X</div>
<div class="grp" style="left:14px;top:457px;width:146px;height:57px"></div>
<div class="a" style="left:22px;top:451px;width:54.7px;height:13px;background:#d4d0c8"></div>
<div class="t " style="left:35.5px;top:452px;letter-spacing:-0.41px;">PI Errors</div>
<div class="a" style="left:24px;top:454px;width:8px;height:8px;background:#00ffff;border:1px solid #000"></div>
<div class="t " style="left:22.3px;top:468px;letter-spacing:-0.21px;">Average:</div>
<div class="t v" style="right:494.5px;top:468px;">25.08</div>
<div class="t " style="left:22.3px;top:483px;letter-spacing:-0.60px;">Maximum:</div>
<div class="t v" style="right:494.5px;top:483px;">80</div>
<div class="t " style="left:22.3px;top:498px;letter-spacing:-0.05px;">Total:</div>
<div class="t v" style="right:494.5px;top:498px;">449352</div>
<div class="grp" style="left:172px;top:457px;width:146px;height:57px"></div>
<div class="a" style="left:180px;top:451px;width:62.5px;height:13px;background:#d4d0c8"></div>
<div class="t " style="left:193.5px;top:452px;letter-spacing:-0.46px;">PI Failures</div>
<div class="a" style="left:182px;top:454px;width:8px;height:8px;background:#ffff00;border:1px solid #000"></div>
<div class="t " style="left:181.10000000000002px;top:468px;letter-spacing:-0.21px;">Average:</div>
<div class="t v" style="right:335.7px;top:468px;">0.01</div>
<div class="t " style="left:181.10000000000002px;top:483px;letter-spacing:-0.60px;">Maximum:</div>
<div class="t v" style="right:335.7px;top:483px;">6</div>
<div class="t " style="left:181.10000000000002px;top:498px;letter-spacing:-0.05px;">Total:</div>
<div class="t v" style="right:335.7px;top:498px;">755</div>
<div class="grp" style="left:331px;top:457px;width:147px;height:42px"></div>
<div class="a" style="left:339px;top:451px;width:37px;height:13px;background:#d4d0c8"></div>
<div class="t " style="left:352.5px;top:452px;letter-spacing:-0.31px;">Jitter</div>
<div class="a" style="left:341px;top:454px;width:8px;height:8px;background:#ff00ff;border:1px solid #000"></div>
<div class="t " style="left:339.3px;top:468px;letter-spacing:-0.21px;">Average:</div>
<div class="t v" style="right:176.5px;top:468px;">9.38 %</div>
<div class="t " style="left:339.3px;top:483px;letter-spacing:-0.60px;">Maximum:</div>
<div class="t v" style="right:176.5px;top:483px;">11.6 %</div>
<div class="t " style="left:340.4px;top:501px;letter-spacing:-0.46px;">PO failures:</div>
<div class="t v" style="right:176.5px;top:501px;">0</div>
</div></body></html>
